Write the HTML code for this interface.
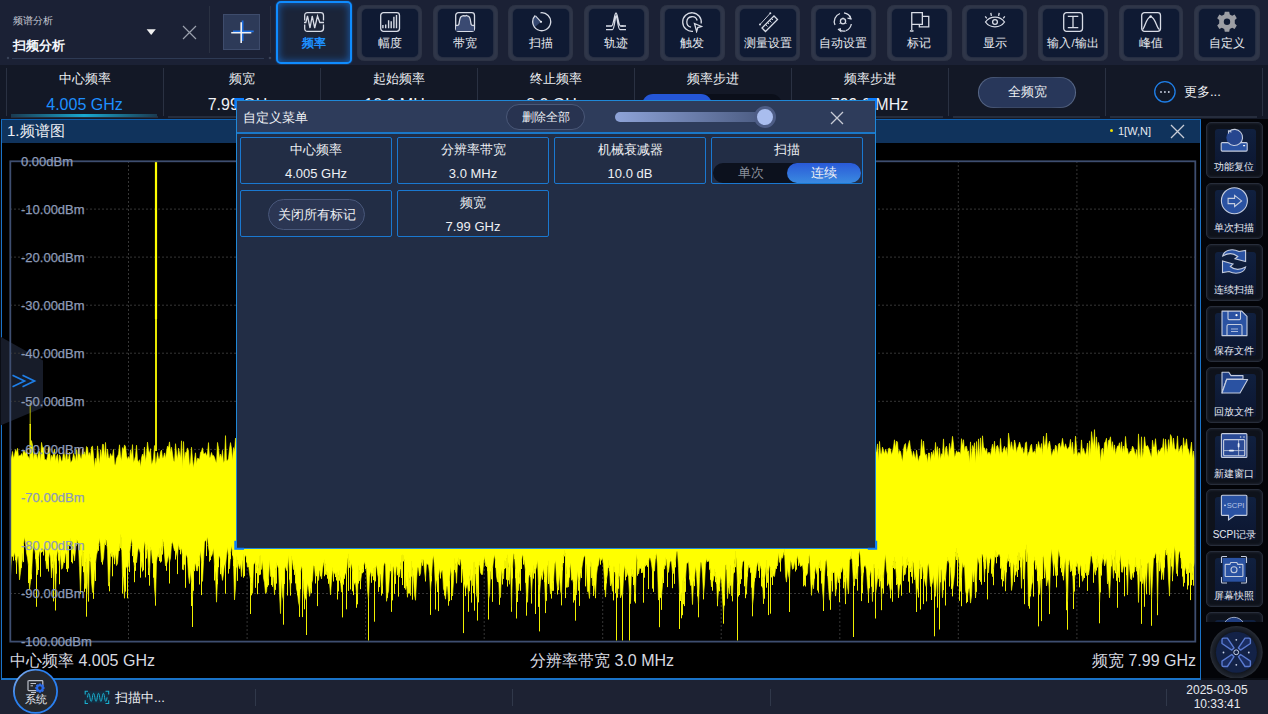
<!DOCTYPE html>
<html><head><meta charset="utf-8">
<style>
*{box-sizing:border-box;margin:0;padding:0}
html,body{width:1268px;height:714px;overflow:hidden;background:#0a0d14;font-family:"Liberation Sans",sans-serif;color:#e8ebf0}
.a{position:absolute}
#top{left:0;top:0;width:1268px;height:65px;background:#1b2135}
#par{left:0;top:65px;width:1268px;height:54px;background:#131826}
.tb{position:absolute;top:4.7px;height:56.3px;width:65px;border-radius:7px;background:#30374a;box-shadow:inset 0 0 2px #262c3c}
.tb .in{position:absolute;left:5px;top:4.3px;right:4.5px;bottom:4.4px;border-radius:5px;background:#0f1a33;box-shadow:0 0 2px #0f1a33}
.tb .lb{position:absolute;left:0;right:0;top:31.5px;text-align:center;font-size:11.5px;color:#e6e9ef;white-space:nowrap}
.tb svg{position:absolute;left:22px;top:7px}
.pc{position:absolute;top:0;height:54px;width:157px;text-align:center}
.pc .l{position:absolute;left:0;right:0;top:5px;font-size:13px;color:#eef0f4}
.pc .v{position:absolute;left:0;right:0;top:30.5px;font-size:16px;color:#f0f2f6}
.sep{position:absolute;width:1px;background:#2a3142}
#chart{left:1px;top:119px;width:1200px;height:561px;border:1px solid #1a73c8;border-top:2px solid #0f60b0;border-bottom:2px solid #1a73c8;background:#000}
#ctitle{left:0;top:-1px;width:1198px;height:23px;background:#10335c}
.yl{position:absolute;left:21px;font-size:13px;line-height:15px;color:#8d9bb8;white-space:nowrap;-webkit-text-stroke:0.25px #8d9bb8}
#side{left:1201px;top:119px;width:67px;height:559px;background:#030408}
.sb{position:absolute;left:5.2px;width:56.4px;height:56.6px;border-radius:5px;background:#0e121b;border:1px solid #272d3a;box-shadow:inset 0 0 3px rgba(90,100,120,0.35)}
.sb .in{position:absolute;left:7.6px;top:6.6px;width:41px;height:43px;border-radius:3px;background:linear-gradient(180deg,#10203f,#0c1630)}
.sb .lb{position:absolute;left:0;right:0;top:37.5px;text-align:center;font-size:10px;color:#e6e9ef;white-space:nowrap}
#status{left:0;top:680px;width:1268px;height:34px;background:#1d2233}
#dlg{left:236px;top:100px;width:640px;height:449px;background:#222d45;border:1px solid #1f88d8}
#dhead{left:0;top:0;width:638px;height:33px;background:#2e3c5b;border-bottom:2px solid #1a78c8}
.cell{position:absolute;width:152px;height:47px;border:1px solid #1a78d0;border-radius:2px;text-align:center}
.cell .l{position:absolute;left:0;right:0;top:2.5px;font-size:13px;color:#eef0f4}
.cell .v{position:absolute;left:0;right:0;top:28px;font-size:13px;color:#eef0f4}
</style></head><body>

<!-- TOP BAR -->
<div id="top" class="a">
  <div class="a" style="left:13px;top:14px;font-size:10px;color:#c8ccd6">频谱分析</div>
  <div class="a" style="left:13px;top:37px;font-size:13px;font-weight:bold;color:#f4f6fa">扫频分析</div>
  <svg class="a" style="left:146px;top:29px" width="11" height="7"><path d="M0.6 0.3H9.8L5.2 6Z" fill="#f0f0f0"/></svg>
  <svg class="a" style="left:182px;top:25px" width="15" height="15"><path d="M1 1L14 14M14 1L1 14" stroke="#9aa0ac" stroke-width="1.2"/></svg>
  <div class="a" style="left:209px;top:6px;width:1px;height:47px;background:#2a3142"></div>
  <div class="a" style="left:270px;top:6px;width:1px;height:47px;background:#2a3142"></div>
  <div class="a" style="left:12px;top:58px;width:252px;height:1px;background:#2e3a54"></div>
  <div class="a" style="left:223px;top:14px;width:37px;height:36px;background:#2d3a58;border:1px solid #3e4c6c"></div>
  <svg class="a" style="left:225px;top:15px" width="34" height="34" viewBox="225 15 34 34"><path d="M242.6 20.4V41M233 31.4H253.7" stroke="#1f6fe0" stroke-width="1.8"/><path d="M241.2 22.2V43.1M231.2 32.8H251.3" stroke="#eef0f4" stroke-width="1.6"/></svg><svg class="a" style="left:264px;top:54px" width="10" height="8"><circle cx="6" cy="4" r="1.3" fill="#3a4358"/></svg><svg class="a" style="left:5px;top:54px" width="6" height="8"><circle cx="3" cy="4" r="1.2" fill="#3a4358"/></svg>

  <!-- active freq button -->
  <div class="a" style="left:276px;top:1px;width:76px;height:63px;border:2px solid #0f8cff;border-radius:5px;background:#1b2438;box-shadow:0 0 9px rgba(26,120,230,0.75) inset, 0 0 2px rgba(26,140,255,0.6)"></div>
  <svg class="a" style="left:303px;top:11px" width="22" height="22" viewBox="-1 -1 22 22"><path d="M0.7 8.6V3.5Q0.7 0.7 3.5 0.7H16.7Q19.5 0.7 19.5 3.5V8.6M19.5 12.4V16.5Q19.5 19.3 16.7 19.3H3.5Q0.7 19.3 0.7 16.5V12.4" stroke="#d8dce6" fill="none" stroke-width="1.3" stroke-width="1.4"/><path d="M0 10.5H1.8L3.5 4L6 16L8.2 4L10.7 16L13.5 4L15.8 10.5H20" stroke="#d8dce6" fill="none" stroke-width="1.3" stroke-width="1.1"/></svg>
  <div class="a" style="left:276px;top:35px;width:76px;text-align:center;font-size:12px;font-weight:bold;color:#1e90ff">频率</div>

  <div class="tb" style="left:357.0px;width:65px"><div class="in"></div><svg width="22" height="22" viewBox="-1 -1 22 22" style="left:21.5px;top:6px"><rect x="0.7" y="0.7" width="18.8" height="18.6" rx="2.8" stroke="#d8dce6" fill="none" stroke-width="1.3"/><path d="M2.9 16.3V13M5.7 16.3V12.4M8.6 16.3V8.2M11.2 16.3V9.2M13.9 16.3V4.8M16.5 16.3V2.9" stroke="#d8dce6" stroke-width="1.4"/></svg><div class="lb">幅度</div></div>
<div class="tb" style="left:432.65px;width:65px"><div class="in"></div><svg width="22" height="22" viewBox="-1 -1 22 22" style="left:21.5px;top:6px"><rect x="0.7" y="0.7" width="18.8" height="18.6" rx="2.8" stroke="#d8dce6" fill="none" stroke-width="1.3"/><path d="M1 13.5C3 13 3.5 14 4 12C4.5 9 4.6 4.5 7 4.2L8.5 3.6L10 4L11.5 3.4L13 4.2C15.5 4.5 15.5 9 16 12C16.5 14 17 13 19 13.5V19H1Z" fill="#3a4a72"/><path d="M1 13.5C3 13 3.5 14 4 12C4.5 9 4.6 4.5 7 4.2L8.5 3.6L10 4L11.5 3.4L13 4.2C15.5 4.5 15.5 9 16 12C16.5 14 17 13 19 13.5" stroke="#d8dce6" fill="none" stroke-width="1.3" stroke-width="1.1"/></svg><div class="lb">带宽</div></div>
<div class="tb" style="left:508.3px;width:65px"><div class="in"></div><svg width="22" height="22" viewBox="-1 -1 22 22" style="left:21.5px;top:6px"><path d="M10 9.8L4.5 3.8A8.6 8.6 0 0 0 3.5 15.5Z" fill="#34466e"/><path d="M4.2 3.5A9 9 0 1 0 9.5 0.8" stroke="#d8dce6" fill="none" stroke-width="1.3"/><path d="M10 9.8L4.5 3.8" stroke="#d8dce6" stroke-width="1.1"/><circle cx="10" cy="9.8" r="1.1" fill="#e8ecf4"/></svg><div class="lb">扫描</div></div>
<div class="tb" style="left:583.95px;width:65px"><div class="in"></div><svg width="22" height="22" viewBox="-1 -1 22 22" style="left:21.5px;top:6px"><path d="M0 14H5.5C7.5 14 8.5 1 10 1C11.5 1 12.5 14 14.5 14H20M0 17.6H6.5C8.5 17.6 9 4 10.2 4C11.4 4 11.8 17.6 14 17.6H20" stroke="#d8dce6" fill="none" stroke-width="1.3" stroke-width="1.1"/><path d="M15.5 13L18.5 14L15.5 15Z" fill="#d8dce6"/></svg><div class="lb">轨迹</div></div>
<div class="tb" style="left:659.6px;width:65px"><div class="in"></div><svg width="22" height="22" viewBox="-1 -1 22 22" style="left:21.5px;top:6px"><path d="M19.2 11.5A9.3 9.3 0 1 0 11 19.3" stroke="#d8dce6" fill="none" stroke-width="1.3"/><path d="M15.2 8.5A5.3 5.3 0 1 0 9 15.2" stroke="#d8dce6" fill="none" stroke-width="1.3"/><path d="M12.5 11.5L19.5 14.5L15.8 15.5L14.6 19.5Z" stroke="#d8dce6" fill="none" stroke-width="1.3" stroke-width="1.1"/></svg><div class="lb">触发</div></div>
<div class="tb" style="left:735.25px;width:65px"><div class="in"></div><svg width="22" height="22" viewBox="-1 -1 22 22" style="left:21.5px;top:6px"><path d="M7.5 19.5L19.5 7.5L16 4L4 16Z" stroke="#d8dce6" fill="none" stroke-width="1.3" stroke-width="1.2"/><path d="M8 13L9.5 14.5M10 11L11 12M12 9L13.5 10.5M14 7L15 8" stroke="#d8dce6" stroke-width="0.9"/><path d="M2 12.5L12.3 1.2" stroke="#d8dce6" stroke-width="0.9"/><circle cx="2" cy="12.5" r="1" fill="#d8dce6"/><circle cx="12.3" cy="1.2" r="1" fill="#d8dce6"/></svg><div class="lb">测量设置</div></div>
<div class="tb" style="left:810.9000000000001px;width:65px"><div class="in"></div><svg width="22" height="22" viewBox="-1 -1 22 22" style="left:21.5px;top:6px"><path d="M7 1.5A8.5 8.5 0 0 0 2 13M18 7A8.5 8.5 0 0 0 11 0.8M13 18.7A8.5 8.5 0 0 0 18.3 12M6.5 18A8.5 8.5 0 0 0 12.5 19" stroke="#d8dce6" fill="none" stroke-width="1.3" stroke-width="1.1"/><path d="M16.5 3.5L17.8 6.8L14.5 6.2M5 17L7.5 19L7 16" stroke="#d8dce6" fill="none" stroke-width="1.3" stroke-width="1"/><circle cx="10" cy="9.3" r="2.6" stroke="#d8dce6" fill="none" stroke-width="1.3"/><path d="M10 5.5V6.6M6.5 11.5L7.5 11M13.5 11.5L12.5 11" stroke="#d8dce6" stroke-width="1"/></svg><div class="lb">自动设置</div></div>
<div class="tb" style="left:886.5500000000001px;width:65px"><div class="in"></div><svg width="22" height="22" viewBox="-1 -1 22 22" style="left:21.5px;top:6px"><path d="M2.75 18.2V0.6H13.35V12.4H2.75M13.35 4.4H19.75V14.8H10.35V12.4" stroke="#d8dce6" fill="none" stroke-width="1.3" stroke-width="1.1"/><path d="M1 18.6Q2.75 19.8 4.5 18.6" stroke="#d8dce6" fill="none" stroke-width="1.3" stroke-width="1.1"/></svg><div class="lb">标记</div></div>
<div class="tb" style="left:962.2px;width:65px"><div class="in"></div><svg width="22" height="22" viewBox="-1 -1 22 22" style="left:21.5px;top:6px"><path d="M0.5 10C5 3.5 15 3.5 19.5 10C15 16.5 5 16.5 0.5 10Z" stroke="#d8dce6" fill="none" stroke-width="1.3"/><circle cx="10" cy="10" r="2.4" stroke="#d8dce6" fill="none" stroke-width="1.3" stroke-width="1.5"/><path d="M1.8 6.3L0.2 4.3M6.4 3.8L5.8 0.8M13.6 3.8L14.2 0.8M18.2 6.3L19.8 4.3" stroke="#d8dce6" fill="none" stroke-width="1.3" stroke-width="1.1"/></svg><div class="lb">显示</div></div>
<div class="tb" style="left:1038px;width:70px"><div class="in"></div><svg width="22" height="22" viewBox="-1 -1 22 22" style="left:24.0px;top:6px"><rect x="0.7" y="0.7" width="18.8" height="18.6" rx="2.8" stroke="#d8dce6" fill="none" stroke-width="1.3" stroke-width="1.5"/><path d="M4.8 4.3H15.3M10 4.3V15.6M4.8 15.6H15.3" stroke="#d8dce6" fill="none" stroke-width="1.3" stroke-width="1.5"/></svg><div class="lb">输入/输出</div></div>
<div class="tb" style="left:1118.8px;width:64.5px"><div class="in"></div><svg width="22" height="22" viewBox="-1 -1 22 22" style="left:21.25px;top:6px"><rect x="0.7" y="0.7" width="18.8" height="18.6" rx="2.8" stroke="#d8dce6" fill="none" stroke-width="1.3"/><path d="M1.5 17.5C4 16 5 5.5 9.7 4.6C14.5 5.5 15.5 16 18.5 17.5" stroke="#d8dce6" fill="none" stroke-width="1.3" stroke-width="1.1"/><circle cx="9.7" cy="4.5" r="1.2" fill="#e8ecf4"/></svg><div class="lb">峰值</div></div>
<div class="tb" style="left:1194px;width:65.5px"><div class="in"></div><svg width="22" height="22" viewBox="-1 -1 22 22" style="left:21.75px;top:6px"><g transform="translate(10 9.8)"><path fill="#9c9ea4" d="M-2.2 -10H2.2L2.8 -7.2L5.2 -6L7.6 -7.3L9.8 -3.6L7.8 -1.8V1.8L9.8 3.6L7.6 7.3L5.2 6L2.8 7.2L2.2 10H-2.2L-2.8 7.2L-5.2 6L-7.6 7.3L-9.8 3.6L-7.8 1.8V-1.8L-9.8 -3.6L-7.6 -7.3L-5.2 -6L-2.8 -7.2Z"/><circle r="3.2" fill="#0f1a33"/></g></svg><div class="lb">自定义</div></div>
</div>

<!-- PARAM BAR -->
<div id="par" class="a">
  <div class="pc" style="left:6px"><div class="l">中心频率</div><div class="v" style="color:#1e8fff">4.005 GHz</div></div>
<div class="pc" style="left:163px"><div class="l">频宽</div><div class="v" style="color:#f0f2f6">7.99 GHz</div></div>
<div class="pc" style="left:320px"><div class="l">起始频率</div><div class="v" style="color:#f0f2f6">10.0 MHz</div></div>
<div class="pc" style="left:477px"><div class="l">终止频率</div><div class="v" style="color:#f0f2f6">8.0 GHz</div></div>
<div class="pc" style="left:634px"><div class="l">频率步进</div><div class="v" style="color:#f0f2f6"></div></div>
<div class="pc" style="left:791px"><div class="l">频率步进</div><div class="v" style="color:#f0f2f6">799.0 MHz</div></div>
<div class="sep" style="left:6px;top:3px;height:48px"></div>
<div class="a" style="left:11px;top:51px;width:147px;height:2px;background:#262d3d"></div>
<div class="sep" style="left:163px;top:3px;height:48px"></div>
<div class="a" style="left:168px;top:51px;width:147px;height:2px;background:#262d3d"></div>
<div class="sep" style="left:320px;top:3px;height:48px"></div>
<div class="a" style="left:325px;top:51px;width:147px;height:2px;background:#262d3d"></div>
<div class="sep" style="left:477px;top:3px;height:48px"></div>
<div class="a" style="left:482px;top:51px;width:147px;height:2px;background:#262d3d"></div>
<div class="sep" style="left:634px;top:3px;height:48px"></div>
<div class="a" style="left:639px;top:51px;width:147px;height:2px;background:#262d3d"></div>
<div class="sep" style="left:791px;top:3px;height:48px"></div>
<div class="a" style="left:796px;top:51px;width:147px;height:2px;background:#262d3d"></div>
<div class="sep" style="left:948px;top:3px;height:48px"></div>
<div class="a" style="left:953px;top:51px;width:147px;height:2px;background:#262d3d"></div>
<div class="sep" style="left:1105px;top:3px;height:48px"></div>
<div class="a" style="left:1110px;top:51px;width:147px;height:2px;background:#262d3d"></div>
<div class="sep" style="left:1262px;top:3px;height:48px"></div>
<div class="a" style="left:11px;top:49px;width:146px;height:3px;background:linear-gradient(90deg,#1a3a50,#19a8d0 50%,#1a3a50)"></div>
<div class="a" style="left:642px;top:29px;width:140px;height:22px;border-radius:11px;background:#0b0f1a"></div><div class="a" style="left:642px;top:29px;width:70px;height:22px;border-radius:11px;background:#2456d8"></div>
<div class="a" style="left:978px;top:11.8px;width:98px;height:31px;border-radius:16px;background:linear-gradient(90deg,#5a6a8a,#3a4866 25%,#3a4866 75%,#5a6a8a);padding:1px"><div style="width:100%;height:100%;border-radius:15px;background:#28375a;text-align:center;line-height:28px;font-size:13px;color:#eef0f4">全频宽</div></div>
<svg class="a" style="left:1152px;top:14px" width="26" height="26" viewBox="1152 79 26 26"><circle cx="1164.9" cy="91.8" r="10.2" fill="none" stroke="#1f7fe8" stroke-width="1.3"/><circle cx="1161" cy="92" r="0.9" fill="#cfd6e6"/><circle cx="1164.9" cy="92" r="0.9" fill="#cfd6e6"/><circle cx="1168.8" cy="92" r="0.9" fill="#cfd6e6"/></svg>
<div class="a" style="left:1184px;top:18px;font-size:13px;color:#eef0f4">更多...</div>
</div>

<!-- CHART -->
<div id="chart" class="a">
  <div id="ctitle" class="a">
    <div class="a" style="left:5px;top:2px;font-size:15px;color:#eef0f4">1.频谱图</div>
    <div class="a" style="left:1108px;top:9px;width:3px;height:3px;border-radius:50%;background:#f0e000"></div>
    <div class="a" style="left:1116px;top:5px;font-size:11px;color:#e6e9ef">1[W,N]</div>
    <svg class="a" style="left:1168px;top:4px" width="15" height="15"><path d="M1 1L14 14M14 1L1 14" stroke="#c8ccd6" stroke-width="1.3"/></svg>
  </div>
  <svg class="a" style="left:-1px;top:-1px" width="1200" height="560" viewBox="1 119 1200 560">
    <path d="M1 336L43 359.5V406.5L1 424.2Z" fill="#171c29"/><path d="M12.5 374.3L24.5 380L12.5 385.7M22.5 374.3L34.5 380L22.5 385.7" fill="none" stroke="#1f7fe8" stroke-width="1.7"/>
    <path d="M10 208.1H1195.4" stroke="#363636" stroke-width="1" stroke-dasharray="2 2"/>
<path d="M10 256.1H1195.4" stroke="#363636" stroke-width="1" stroke-dasharray="2 2"/>
<path d="M10 304.2H1195.4" stroke="#363636" stroke-width="1" stroke-dasharray="2 2"/>
<path d="M10 352.2H1195.4" stroke="#363636" stroke-width="1" stroke-dasharray="2 2"/>
<path d="M10 400.3H1195.4" stroke="#363636" stroke-width="1" stroke-dasharray="2 2"/>
<path d="M10 448.4H1195.4" stroke="#363636" stroke-width="1" stroke-dasharray="2 2"/>
<path d="M10 496.4H1195.4" stroke="#363636" stroke-width="1" stroke-dasharray="2 2"/>
<path d="M10 544.5H1195.4" stroke="#363636" stroke-width="1" stroke-dasharray="2 2"/>
<path d="M10 592.5H1195.4" stroke="#363636" stroke-width="1" stroke-dasharray="2 2"/>
<path d="M128.5 160V640.6" stroke="#363636" stroke-width="1" stroke-dasharray="2 2"/>
<path d="M247.1 160V640.6" stroke="#363636" stroke-width="1" stroke-dasharray="2 2"/>
<path d="M365.6 160V640.6" stroke="#363636" stroke-width="1" stroke-dasharray="2 2"/>
<path d="M484.2 160V640.6" stroke="#363636" stroke-width="1" stroke-dasharray="2 2"/>
<path d="M602.7 160V640.6" stroke="#363636" stroke-width="1" stroke-dasharray="2 2"/>
<path d="M721.2 160V640.6" stroke="#363636" stroke-width="1" stroke-dasharray="2 2"/>
<path d="M839.8 160V640.6" stroke="#363636" stroke-width="1" stroke-dasharray="2 2"/>
<path d="M958.3 160V640.6" stroke="#363636" stroke-width="1" stroke-dasharray="2 2"/>
<path d="M1076.9 160V640.6" stroke="#363636" stroke-width="1" stroke-dasharray="2 2"/>
    <path d="M10.5 452.3L11.5 457.7L12.5 450.5L13.5 457.4L14.5 454.1L15.5 448.6L16.5 451.5L17.5 447.3L18.5 455.6L19.5 454.6L20.5 454.8L21.5 452.5L22.5 455.9L23.5 449.2L24.5 450.2L25.5 453.3L26.5 448.4L27.5 454.9L28.5 455.7L29.5 459.0L30.5 454.1L31.5 439.6L32.5 444.1L33.5 458.9L34.5 451.8L35.5 453.6L36.5 453.4L37.5 458.9L38.5 450.2L39.5 450.6L40.5 460.2L41.5 441.4L42.5 446.7L43.5 446.6L44.5 458.4L45.5 458.5L46.5 459.5L47.5 455.3L48.5 446.2L49.5 446.7L50.5 461.0L51.5 454.3L52.5 457.0L53.5 452.1L54.5 448.3L55.5 460.2L56.5 455.2L57.5 453.2L58.5 463.3L59.5 453.8L60.5 456.1L61.5 461.1L62.5 458.9L63.5 450.4L64.5 454.4L65.5 459.9L66.5 447.7L67.5 458.7L68.5 457.7L69.5 451.2L70.5 461.4L71.5 460.7L72.5 458.6L73.5 452.5L74.5 455.4L75.5 460.2L76.5 448.6L77.5 460.4L78.5 447.0L79.5 451.0L80.5 456.9L81.5 457.4L82.5 448.0L83.5 452.6L84.5 450.8L85.5 455.8L86.5 445.5L87.5 446.6L88.5 455.3L89.5 451.6L90.5 456.5L91.5 446.0L92.5 445.1L93.5 454.8L94.5 466.9L95.5 457.3L96.5 462.5L97.5 444.9L98.5 453.9L99.5 463.6L100.5 448.7L101.5 457.2L102.5 443.3L103.5 443.5L104.5 456.8L105.5 441.4L106.5 458.8L107.5 448.0L108.5 456.5L109.5 457.8L110.5 452.6L111.5 455.2L112.5 455.0L113.5 448.4L114.5 463.0L115.5 464.2L116.5 457.4L117.5 455.4L118.5 453.1L119.5 443.8L120.5 455.1L121.5 459.7L122.5 446.6L123.5 449.4L124.5 443.9L125.5 445.5L126.5 454.5L127.5 458.7L128.5 455.6L129.5 458.7L130.5 449.0L131.5 455.2L132.5 443.6L133.5 461.8L134.5 458.8L135.5 455.1L136.5 444.2L137.5 459.0L138.5 461.4L139.5 458.7L140.5 466.3L141.5 456.9L142.5 453.1L143.5 456.2L144.5 446.1L145.5 460.7L146.5 453.6L147.5 441.1L148.5 449.3L149.5 452.7L150.5 447.7L151.5 463.8L152.5 461.3L153.5 457.0L154.5 444.5L155.5 463.8L156.5 459.7L157.5 451.5L158.5 457.5L159.5 458.0L160.5 451.2L161.5 449.1L162.5 457.3L163.5 456.2L164.5 451.9L165.5 457.5L166.5 450.4L167.5 445.1L168.5 447.0L169.5 440.9L170.5 452.2L171.5 446.2L172.5 452.8L173.5 459.4L174.5 461.2L175.5 442.7L176.5 452.2L177.5 458.4L178.5 447.1L179.5 451.7L180.5 457.2L181.5 439.8L182.5 466.9L183.5 440.5L184.5 460.0L185.5 451.4L186.5 451.4L187.5 446.9L188.5 449.7L189.5 465.1L190.5 461.0L191.5 446.2L192.5 458.5L193.5 467.0L194.5 458.7L195.5 451.8L196.5 462.8L197.5 457.3L198.5 457.6L199.5 459.0L200.5 451.4L201.5 450.2L202.5 446.8L203.5 452.7L204.5 452.9L205.5 451.6L206.5 455.3L207.5 452.1L208.5 441.6L209.5 457.2L210.5 455.7L211.5 451.5L212.5 454.8L213.5 454.4L214.5 456.4L215.5 459.7L216.5 462.3L217.5 441.4L218.5 447.2L219.5 457.7L220.5 453.1L221.5 457.7L222.5 449.3L223.5 462.2L224.5 459.2L225.5 434.6L226.5 459.2L227.5 459.8L228.5 457.3L229.5 448.1L230.5 441.6L231.5 447.5L232.5 459.4L233.5 446.6L234.5 451.3L235.5 437.1L236.5 445.3L237.5 444.2L238.5 455.4L239.5 449.3L240.5 466.4L241.5 449.2L242.5 442.3L243.5 453.9L244.5 455.7L245.5 449.4L246.5 456.7L247.5 455.0L248.5 444.6L249.5 464.4L250.5 460.0L251.5 464.0L252.5 453.7L253.5 454.5L254.5 459.4L255.5 452.1L256.5 457.1L257.5 466.6L258.5 445.2L259.5 446.9L260.5 458.5L261.5 441.9L262.5 448.6L263.5 452.2L264.5 454.7L265.5 447.7L266.5 448.4L267.5 460.0L268.5 455.1L269.5 445.8L270.5 455.2L271.5 451.6L272.5 446.0L273.5 442.2L274.5 453.9L275.5 446.0L276.5 455.5L277.5 458.6L278.5 452.4L279.5 452.3L280.5 452.1L281.5 454.1L282.5 456.4L283.5 456.8L284.5 452.7L285.5 464.7L286.5 454.3L287.5 447.1L288.5 466.8L289.5 447.9L290.5 446.1L291.5 446.6L292.5 451.8L293.5 450.3L294.5 458.2L295.5 457.8L296.5 441.4L297.5 455.3L298.5 464.3L299.5 450.7L300.5 459.2L301.5 454.3L302.5 463.0L303.5 468.1L304.5 460.0L305.5 445.0L306.5 456.1L307.5 445.6L308.5 445.5L309.5 459.8L310.5 461.8L311.5 459.1L312.5 456.2L313.5 460.1L314.5 446.0L315.5 455.3L316.5 448.7L317.5 447.3L318.5 454.8L319.5 457.4L320.5 450.2L321.5 450.0L322.5 448.9L323.5 457.0L324.5 461.0L325.5 463.0L326.5 445.3L327.5 451.8L328.5 444.8L329.5 449.0L330.5 457.5L331.5 457.8L332.5 465.8L333.5 461.3L334.5 456.8L335.5 453.5L336.5 443.0L337.5 461.4L338.5 460.3L339.5 458.9L340.5 448.7L341.5 450.3L342.5 449.2L343.5 450.5L344.5 458.2L345.5 457.8L346.5 458.1L347.5 457.7L348.5 448.3L349.5 455.2L350.5 440.4L351.5 449.6L352.5 455.3L353.5 448.0L354.5 457.0L355.5 456.2L356.5 454.2L357.5 454.2L358.5 453.0L359.5 465.7L360.5 447.1L361.5 446.8L362.5 438.7L363.5 452.4L364.5 454.3L365.5 443.9L366.5 450.1L367.5 450.5L368.5 458.5L369.5 464.3L370.5 446.1L371.5 449.7L372.5 455.8L373.5 444.7L374.5 446.8L375.5 452.1L376.5 455.4L377.5 453.4L378.5 455.2L379.5 458.9L380.5 457.2L381.5 456.1L382.5 452.4L383.5 454.6L384.5 459.5L385.5 462.8L386.5 448.2L387.5 455.8L388.5 454.9L389.5 443.9L390.5 435.3L391.5 450.9L392.5 454.8L393.5 462.3L394.5 454.8L395.5 451.2L396.5 457.1L397.5 456.4L398.5 445.2L399.5 453.7L400.5 458.0L401.5 452.1L402.5 459.5L403.5 457.8L404.5 461.0L405.5 456.5L406.5 456.2L407.5 460.4L408.5 449.7L409.5 453.3L410.5 449.0L411.5 457.7L412.5 438.6L413.5 446.6L414.5 453.2L415.5 448.6L416.5 454.7L417.5 466.9L418.5 463.6L419.5 448.7L420.5 446.8L421.5 451.5L422.5 459.1L423.5 449.9L424.5 451.2L425.5 455.3L426.5 438.7L427.5 443.6L428.5 459.3L429.5 449.1L430.5 453.4L431.5 443.8L432.5 458.3L433.5 454.9L434.5 452.3L435.5 451.8L436.5 453.2L437.5 459.1L438.5 464.7L439.5 454.4L440.5 453.1L441.5 460.3L442.5 443.9L443.5 445.2L444.5 455.0L445.5 449.6L446.5 459.6L447.5 448.9L448.5 455.6L449.5 456.8L450.5 445.8L451.5 456.3L452.5 444.4L453.5 455.8L454.5 446.6L455.5 459.3L456.5 463.1L457.5 457.5L458.5 441.1L459.5 454.3L460.5 463.3L461.5 446.7L462.5 452.2L463.5 442.4L464.5 447.8L465.5 449.5L466.5 454.1L467.5 450.2L468.5 451.8L469.5 442.2L470.5 455.6L471.5 458.2L472.5 449.7L473.5 452.3L474.5 456.0L475.5 453.3L476.5 449.3L477.5 460.4L478.5 450.5L479.5 444.1L480.5 453.6L481.5 458.5L482.5 451.2L483.5 452.4L484.5 452.5L485.5 446.0L486.5 454.3L487.5 449.5L488.5 450.7L489.5 447.0L490.5 447.1L491.5 458.0L492.5 456.7L493.5 458.5L494.5 450.7L495.5 457.2L496.5 453.7L497.5 456.1L498.5 462.0L499.5 453.2L500.5 454.0L501.5 468.6L502.5 456.5L503.5 460.3L504.5 449.8L505.5 452.3L506.5 448.2L507.5 449.5L508.5 459.8L509.5 445.6L510.5 462.4L511.5 451.6L512.5 462.4L513.5 453.2L514.5 449.5L515.5 444.7L516.5 452.4L517.5 458.7L518.5 449.9L519.5 453.1L520.5 448.6L521.5 463.9L522.5 458.2L523.5 446.4L524.5 453.8L525.5 450.8L526.5 460.4L527.5 457.8L528.5 458.1L529.5 445.0L530.5 453.6L531.5 453.1L532.5 451.8L533.5 447.4L534.5 459.0L535.5 446.0L536.5 447.4L537.5 450.3L538.5 446.5L539.5 465.9L540.5 460.9L541.5 444.9L542.5 454.0L543.5 459.3L544.5 452.6L545.5 463.7L546.5 458.9L547.5 461.8L548.5 455.1L549.5 449.4L550.5 453.0L551.5 452.2L552.5 455.6L553.5 448.0L554.5 455.7L555.5 443.1L556.5 440.9L557.5 450.8L558.5 452.4L559.5 448.6L560.5 441.7L561.5 457.4L562.5 453.5L563.5 454.0L564.5 457.7L565.5 444.9L566.5 452.9L567.5 459.7L568.5 451.7L569.5 458.9L570.5 460.8L571.5 442.1L572.5 446.5L573.5 445.4L574.5 446.3L575.5 456.1L576.5 448.8L577.5 451.7L578.5 455.8L579.5 442.6L580.5 453.1L581.5 456.5L582.5 461.1L583.5 456.8L584.5 455.1L585.5 451.9L586.5 464.6L587.5 456.6L588.5 461.2L589.5 448.9L590.5 449.3L591.5 460.6L592.5 459.4L593.5 441.3L594.5 452.5L595.5 457.8L596.5 441.4L597.5 457.2L598.5 441.0L599.5 451.3L600.5 439.8L601.5 438.7L602.5 455.7L603.5 451.5L604.5 464.4L605.5 459.5L606.5 454.0L607.5 446.1L608.5 464.1L609.5 443.4L610.5 449.5L611.5 456.2L612.5 455.3L613.5 450.4L614.5 449.9L615.5 451.2L616.5 441.5L617.5 448.3L618.5 456.0L619.5 450.2L620.5 452.5L621.5 451.8L622.5 450.2L623.5 453.3L624.5 458.3L625.5 454.6L626.5 457.3L627.5 454.2L628.5 451.9L629.5 458.1L630.5 448.9L631.5 445.6L632.5 459.0L633.5 461.9L634.5 439.0L635.5 463.1L636.5 457.5L637.5 456.6L638.5 460.0L639.5 463.9L640.5 444.5L641.5 460.6L642.5 454.9L643.5 457.9L644.5 446.6L645.5 459.0L646.5 446.4L647.5 450.4L648.5 457.3L649.5 443.7L650.5 452.5L651.5 462.4L652.5 456.1L653.5 455.2L654.5 436.5L655.5 451.8L656.5 455.4L657.5 444.7L658.5 444.5L659.5 445.7L660.5 449.3L661.5 465.5L662.5 449.7L663.5 442.0L664.5 453.8L665.5 460.6L666.5 462.3L667.5 457.2L668.5 456.2L669.5 460.5L670.5 454.9L671.5 449.2L672.5 452.4L673.5 460.8L674.5 441.8L675.5 462.6L676.5 449.8L677.5 456.6L678.5 452.6L679.5 457.0L680.5 444.7L681.5 451.1L682.5 460.2L683.5 449.9L684.5 456.0L685.5 452.3L686.5 446.9L687.5 456.7L688.5 437.2L689.5 456.5L690.5 460.5L691.5 459.4L692.5 460.9L693.5 447.8L694.5 449.8L695.5 458.0L696.5 450.5L697.5 448.2L698.5 453.5L699.5 437.7L700.5 454.7L701.5 454.9L702.5 455.3L703.5 454.2L704.5 460.0L705.5 458.1L706.5 454.8L707.5 453.2L708.5 454.9L709.5 457.5L710.5 454.9L711.5 461.2L712.5 451.9L713.5 460.9L714.5 459.6L715.5 457.2L716.5 449.5L717.5 463.7L718.5 450.3L719.5 457.4L720.5 456.6L721.5 456.3L722.5 463.1L723.5 456.0L724.5 453.8L725.5 461.0L726.5 449.4L727.5 457.5L728.5 458.6L729.5 454.2L730.5 448.6L731.5 440.2L732.5 439.7L733.5 450.3L734.5 446.3L735.5 451.2L736.5 466.3L737.5 452.8L738.5 460.2L739.5 453.7L740.5 448.3L741.5 452.6L742.5 446.9L743.5 459.0L744.5 458.7L745.5 450.6L746.5 467.0L747.5 453.9L748.5 447.2L749.5 447.9L750.5 452.0L751.5 447.8L752.5 451.1L753.5 455.1L754.5 454.2L755.5 442.6L756.5 456.7L757.5 437.9L758.5 450.1L759.5 462.8L760.5 453.3L761.5 445.1L762.5 459.5L763.5 455.9L764.5 459.4L765.5 454.9L766.5 466.5L767.5 463.9L768.5 459.3L769.5 458.4L770.5 444.8L771.5 461.6L772.5 438.7L773.5 439.3L774.5 457.5L775.5 453.4L776.5 439.9L777.5 449.1L778.5 458.9L779.5 461.6L780.5 449.2L781.5 454.1L782.5 450.4L783.5 451.4L784.5 449.2L785.5 438.6L786.5 446.6L787.5 453.8L788.5 455.8L789.5 450.5L790.5 462.5L791.5 448.5L792.5 457.9L793.5 458.3L794.5 457.6L795.5 445.6L796.5 452.7L797.5 448.0L798.5 436.9L799.5 457.3L800.5 442.0L801.5 449.9L802.5 451.3L803.5 443.2L804.5 447.7L805.5 457.8L806.5 456.7L807.5 461.4L808.5 451.8L809.5 444.1L810.5 454.2L811.5 458.0L812.5 462.7L813.5 446.8L814.5 453.6L815.5 449.9L816.5 446.6L817.5 449.6L818.5 461.1L819.5 457.5L820.5 445.6L821.5 443.1L822.5 448.8L823.5 453.7L824.5 449.1L825.5 443.1L826.5 452.1L827.5 459.1L828.5 453.7L829.5 450.5L830.5 445.0L831.5 447.7L832.5 452.7L833.5 449.2L834.5 446.6L835.5 444.6L836.5 451.1L837.5 450.5L838.5 448.1L839.5 447.0L840.5 458.4L841.5 458.2L842.5 440.7L843.5 454.2L844.5 457.9L845.5 441.4L846.5 449.3L847.5 459.7L848.5 447.5L849.5 452.6L850.5 459.1L851.5 452.4L852.5 449.5L853.5 442.3L854.5 447.4L855.5 446.2L856.5 462.2L857.5 450.6L858.5 453.2L859.5 455.2L860.5 446.4L861.5 436.8L862.5 442.3L863.5 451.3L864.5 443.4L865.5 441.9L866.5 459.6L867.5 453.8L868.5 455.6L869.5 451.0L870.5 446.6L871.5 448.9L872.5 449.7L873.5 451.3L874.5 457.2L875.5 450.5L876.5 451.2L877.5 442.9L878.5 460.2L879.5 440.4L880.5 451.9L881.5 453.5L882.5 446.1L883.5 449.6L884.5 453.2L885.5 448.3L886.5 450.9L887.5 454.0L888.5 447.6L889.5 447.2L890.5 448.0L891.5 454.0L892.5 450.8L893.5 446.0L894.5 438.8L895.5 447.8L896.5 440.0L897.5 441.2L898.5 454.1L899.5 449.6L900.5 450.4L901.5 456.1L902.5 460.9L903.5 448.5L904.5 443.9L905.5 442.5L906.5 452.1L907.5 447.9L908.5 443.1L909.5 439.5L910.5 447.8L911.5 451.4L912.5 456.8L913.5 450.3L914.5 454.6L915.5 458.5L916.5 449.2L917.5 455.6L918.5 461.1L919.5 455.3L920.5 454.1L921.5 438.5L922.5 450.2L923.5 440.0L924.5 451.0L925.5 454.7L926.5 453.3L927.5 462.1L928.5 452.0L929.5 452.1L930.5 460.9L931.5 451.0L932.5 455.0L933.5 449.4L934.5 457.5L935.5 441.4L936.5 452.9L937.5 445.7L938.5 459.3L939.5 447.2L940.5 458.6L941.5 452.8L942.5 453.5L943.5 437.9L944.5 457.3L945.5 447.3L946.5 445.1L947.5 452.5L948.5 456.8L949.5 442.4L950.5 450.2L951.5 444.6L952.5 435.3L953.5 443.3L954.5 456.4L955.5 454.1L956.5 449.8L957.5 451.7L958.5 450.8L959.5 451.2L960.5 453.5L961.5 437.7L962.5 445.1L963.5 438.7L964.5 450.8L965.5 445.6L966.5 445.2L967.5 451.2L968.5 449.8L969.5 461.7L970.5 440.9L971.5 458.8L972.5 444.5L973.5 447.7L974.5 441.8L975.5 462.3L976.5 440.5L977.5 456.2L978.5 437.9L979.5 456.9L980.5 436.9L981.5 455.7L982.5 434.8L983.5 446.3L984.5 447.0L985.5 450.8L986.5 447.4L987.5 453.9L988.5 451.4L989.5 451.5L990.5 454.7L991.5 448.7L992.5 443.2L993.5 449.7L994.5 440.2L995.5 454.1L996.5 445.4L997.5 444.3L998.5 447.6L999.5 454.4L1000.5 437.4L1001.5 450.6L1002.5 452.4L1003.5 448.0L1004.5 445.3L1005.5 451.0L1006.5 446.5L1007.5 456.2L1008.5 432.1L1009.5 440.1L1010.5 448.9L1011.5 440.8L1012.5 447.3L1013.5 450.1L1014.5 439.0L1015.5 443.2L1016.5 452.2L1017.5 447.1L1018.5 445.1L1019.5 441.1L1020.5 444.4L1021.5 448.4L1022.5 446.4L1023.5 453.2L1024.5 450.8L1025.5 441.8L1026.5 440.9L1027.5 456.0L1028.5 451.7L1029.5 450.2L1030.5 445.1L1031.5 443.2L1032.5 451.5L1033.5 451.5L1034.5 449.7L1035.5 453.6L1036.5 443.0L1037.5 448.3L1038.5 440.6L1039.5 445.7L1040.5 448.6L1041.5 442.5L1042.5 454.6L1043.5 435.2L1044.5 446.0L1045.5 442.3L1046.5 432.0L1047.5 450.0L1048.5 443.2L1049.5 440.1L1050.5 446.5L1051.5 455.6L1052.5 452.1L1053.5 448.4L1054.5 451.5L1055.5 444.1L1056.5 445.2L1057.5 453.7L1058.5 443.2L1059.5 442.1L1060.5 447.5L1061.5 443.8L1062.5 437.3L1063.5 444.1L1064.5 447.8L1065.5 442.8L1066.5 446.2L1067.5 448.8L1068.5 446.8L1069.5 445.2L1070.5 438.3L1071.5 450.3L1072.5 441.2L1073.5 453.2L1074.5 453.0L1075.5 435.1L1076.5 446.2L1077.5 455.8L1078.5 451.6L1079.5 451.8L1080.5 454.4L1081.5 438.9L1082.5 451.6L1083.5 447.4L1084.5 451.4L1085.5 454.2L1086.5 449.8L1087.5 442.0L1088.5 457.1L1089.5 439.8L1090.5 453.9L1091.5 430.6L1092.5 438.9L1093.5 445.5L1094.5 428.6L1095.5 450.8L1096.5 435.9L1097.5 450.4L1098.5 441.4L1099.5 445.9L1100.5 461.2L1101.5 449.1L1102.5 447.0L1103.5 456.4L1104.5 442.1L1105.5 440.4L1106.5 437.2L1107.5 449.7L1108.5 439.5L1109.5 439.3L1110.5 435.8L1111.5 448.4L1112.5 440.7L1113.5 451.0L1114.5 443.9L1115.5 454.1L1116.5 448.5L1117.5 445.0L1118.5 445.2L1119.5 441.8L1120.5 450.6L1121.5 440.8L1122.5 452.3L1123.5 445.0L1124.5 451.4L1125.5 435.4L1126.5 446.7L1127.5 448.1L1128.5 453.8L1129.5 451.9L1130.5 450.0L1131.5 449.9L1132.5 445.1L1133.5 447.0L1134.5 450.7L1135.5 454.7L1136.5 448.6L1137.5 459.0L1138.5 432.9L1139.5 450.4L1140.5 458.2L1141.5 435.8L1142.5 457.3L1143.5 450.6L1144.5 435.8L1145.5 444.2L1146.5 445.6L1147.5 444.4L1148.5 446.7L1149.5 449.9L1150.5 453.6L1151.5 456.8L1152.5 439.2L1153.5 445.9L1154.5 446.1L1155.5 437.7L1156.5 447.8L1157.5 455.5L1158.5 449.0L1159.5 451.3L1160.5 449.1L1161.5 446.8L1162.5 447.1L1163.5 437.6L1164.5 455.1L1165.5 438.1L1166.5 447.3L1167.5 452.5L1168.5 438.6L1169.5 449.1L1170.5 433.6L1171.5 435.9L1172.5 447.4L1173.5 437.1L1174.5 446.7L1175.5 449.4L1176.5 447.5L1177.5 434.9L1178.5 451.5L1179.5 449.3L1180.5 445.9L1181.5 444.3L1182.5 454.9L1183.5 436.8L1184.5 445.8L1185.5 443.9L1186.5 437.9L1187.5 447.0L1188.5 448.5L1189.5 455.1L1190.5 448.8L1191.5 441.1L1192.5 458.0L1193.5 450.0L1194.5 458.0L1194.5 560.9L1193.5 568.2L1192.5 575.1L1191.5 564.2L1190.5 562.7L1189.5 563.2L1188.5 571.2L1187.5 570.9L1186.5 570.2L1185.5 565.6L1184.5 572.2L1183.5 582.4L1182.5 563.8L1181.5 564.3L1180.5 551.4L1179.5 549.8L1178.5 554.8L1177.5 569.9L1176.5 572.6L1175.5 552.0L1174.5 545.3L1173.5 566.2L1172.5 575.9L1171.5 553.2L1170.5 559.5L1169.5 595.1L1168.5 578.2L1167.5 555.1L1166.5 548.3L1165.5 549.3L1164.5 559.8L1163.5 578.7L1162.5 571.1L1161.5 572.0L1160.5 565.7L1159.5 554.4L1158.5 562.5L1157.5 603.3L1156.5 554.3L1155.5 551.6L1154.5 557.1L1153.5 556.8L1152.5 576.7L1151.5 599.0L1150.5 563.9L1149.5 593.8L1148.5 560.7L1147.5 563.3L1146.5 583.5L1145.5 571.6L1144.5 593.1L1143.5 576.8L1142.5 582.6L1141.5 567.6L1140.5 559.2L1139.5 573.5L1138.5 601.5L1137.5 568.2L1136.5 570.3L1135.5 557.5L1134.5 570.6L1133.5 571.9L1132.5 572.1L1131.5 579.0L1130.5 577.4L1129.5 566.3L1128.5 559.5L1127.5 593.9L1126.5 567.2L1125.5 565.1L1124.5 566.6L1123.5 564.4L1122.5 571.3L1121.5 571.0L1120.5 553.2L1119.5 563.2L1118.5 576.2L1117.5 577.5L1116.5 572.0L1115.5 550.0L1114.5 559.4L1113.5 577.3L1112.5 561.0L1111.5 554.8L1110.5 575.9L1109.5 596.8L1108.5 578.2L1107.5 583.0L1106.5 556.9L1105.5 561.5L1104.5 564.9L1103.5 554.4L1102.5 559.0L1101.5 565.2L1100.5 577.9L1099.5 602.1L1098.5 566.7L1097.5 555.7L1096.5 559.9L1095.5 574.1L1094.5 570.1L1093.5 564.1L1092.5 560.6L1091.5 551.7L1090.5 556.9L1089.5 566.9L1088.5 574.1L1087.5 572.4L1086.5 574.5L1085.5 564.3L1084.5 573.0L1083.5 577.5L1082.5 580.4L1081.5 566.7L1080.5 563.6L1079.5 573.3L1078.5 572.5L1077.5 562.9L1076.5 561.5L1075.5 567.6L1074.5 579.1L1073.5 594.4L1072.5 564.5L1071.5 569.7L1070.5 570.8L1069.5 558.0L1068.5 561.3L1067.5 601.6L1066.5 592.2L1065.5 556.7L1064.5 564.9L1063.5 579.3L1062.5 567.4L1061.5 568.1L1060.5 557.5L1059.5 553.8L1058.5 548.1L1057.5 566.8L1056.5 573.8L1055.5 574.5L1054.5 560.8L1053.5 567.5L1052.5 557.3L1051.5 547.7L1050.5 563.8L1049.5 592.7L1048.5 577.7L1047.5 580.0L1046.5 585.0L1045.5 565.0L1044.5 573.3L1043.5 554.5L1042.5 557.5L1041.5 597.2L1040.5 580.7L1039.5 575.8L1038.5 589.9L1037.5 571.8L1036.5 565.9L1035.5 560.9L1034.5 556.7L1033.5 564.7L1032.5 581.1L1031.5 584.2L1030.5 593.2L1029.5 597.9L1028.5 605.1L1027.5 556.8L1026.5 544.7L1025.5 550.6L1024.5 580.1L1023.5 561.3L1022.5 555.1L1021.5 587.4L1020.5 558.5L1019.5 552.7L1018.5 552.3L1017.5 556.5L1016.5 568.0L1015.5 574.3L1014.5 566.3L1013.5 561.2L1012.5 582.3L1011.5 589.5L1010.5 562.5L1009.5 560.2L1008.5 554.4L1007.5 559.6L1006.5 564.0L1005.5 584.4L1004.5 570.6L1003.5 567.3L1002.5 578.0L1001.5 570.4L1000.5 557.6L999.5 553.2L998.5 553.3L997.5 556.0L996.5 552.5L995.5 550.6L994.5 557.9L993.5 569.0L992.5 575.7L991.5 559.5L990.5 556.2L989.5 559.9L988.5 571.8L987.5 570.4L986.5 554.4L985.5 560.6L984.5 576.6L983.5 558.4L982.5 553.0L981.5 553.9L980.5 559.3L979.5 564.4L978.5 560.0L977.5 556.0L976.5 582.3L975.5 597.0L974.5 568.6L973.5 581.0L972.5 569.1L971.5 595.1L970.5 602.1L969.5 586.6L968.5 588.6L967.5 595.5L966.5 594.6L965.5 589.3L964.5 563.5L963.5 566.3L962.5 560.8L961.5 577.9L960.5 590.4L959.5 566.0L958.5 556.4L957.5 554.7L956.5 548.1L955.5 553.0L954.5 572.5L953.5 581.8L952.5 589.5L951.5 583.7L950.5 567.4L949.5 563.3L948.5 560.0L947.5 557.0L946.5 565.2L945.5 578.3L944.5 578.8L943.5 581.8L942.5 596.8L941.5 567.7L940.5 570.8L939.5 595.3L938.5 563.4L937.5 593.6L936.5 575.3L935.5 595.4L934.5 592.4L933.5 573.7L932.5 581.2L931.5 584.6L930.5 585.4L929.5 573.4L928.5 561.7L927.5 566.1L926.5 586.6L925.5 583.7L924.5 578.4L923.5 576.0L922.5 565.0L921.5 567.6L920.5 565.4L919.5 560.5L918.5 587.7L917.5 587.4L916.5 595.5L915.5 574.5L914.5 578.8L913.5 562.1L912.5 561.0L911.5 568.7L910.5 568.1L909.5 570.1L908.5 563.1L907.5 557.3L906.5 558.9L905.5 572.7L904.5 574.2L903.5 568.2L902.5 556.5L901.5 583.6L900.5 582.8L899.5 585.0L898.5 594.0L897.5 578.8L896.5 578.0L895.5 563.0L894.5 556.9L893.5 561.9L892.5 566.4L891.5 587.7L890.5 590.7L889.5 584.4L888.5 582.0L887.5 574.5L886.5 568.5L885.5 552.9L884.5 562.2L883.5 578.0L882.5 574.8L881.5 599.0L880.5 574.6L879.5 581.4L878.5 568.8L877.5 578.1L876.5 586.1L875.5 593.3L874.5 564.2L873.5 564.3L872.5 600.6L871.5 573.7L870.5 568.8L869.5 577.7L868.5 595.0L867.5 585.3L866.5 569.0L865.5 564.6L864.5 564.7L863.5 566.8L862.5 584.9L861.5 575.8L860.5 557.2L859.5 548.7L858.5 554.6L857.5 578.1L856.5 578.0L855.5 564.6L854.5 582.3L853.5 581.9L852.5 563.5L851.5 551.5L850.5 557.8L849.5 559.3L848.5 593.0L847.5 585.6L846.5 571.3L845.5 598.6L844.5 576.6L843.5 570.5L842.5 565.4L841.5 571.3L840.5 568.4L839.5 579.9L838.5 581.7L837.5 573.7L836.5 585.5L835.5 595.1L834.5 570.6L833.5 572.0L832.5 571.0L831.5 572.3L830.5 600.0L829.5 598.4L828.5 585.6L827.5 570.7L826.5 558.1L825.5 561.1L824.5 575.7L823.5 600.3L822.5 588.8L821.5 572.7L820.5 560.3L819.5 562.2L818.5 565.0L817.5 574.2L816.5 571.6L815.5 564.9L814.5 573.1L813.5 587.8L812.5 579.2L811.5 594.4L810.5 576.2L809.5 553.3L808.5 556.9L807.5 572.0L806.5 574.5L805.5 572.9L804.5 584.2L803.5 571.6L802.5 563.5L801.5 564.9L800.5 565.5L799.5 561.5L798.5 561.4L797.5 553.9L796.5 560.0L795.5 567.5L794.5 559.8L793.5 567.5L792.5 568.3L791.5 562.2L790.5 559.1L789.5 578.4L788.5 574.3L787.5 567.1L786.5 581.1L785.5 574.7L784.5 549.3L783.5 552.6L782.5 557.1L781.5 556.2L780.5 561.3L779.5 561.3L778.5 551.6L777.5 564.7L776.5 565.6L775.5 568.2L774.5 575.6L773.5 575.1L772.5 570.7L771.5 569.7L770.5 567.4L769.5 563.8L768.5 572.6L767.5 573.7L766.5 560.0L765.5 571.4L764.5 578.8L763.5 600.2L762.5 579.5L761.5 569.8L760.5 565.6L759.5 563.5L758.5 561.3L757.5 562.1L756.5 566.9L755.5 576.9L754.5 577.0L753.5 595.5L752.5 604.5L751.5 573.7L750.5 568.2L749.5 564.1L748.5 564.6L747.5 572.7L746.5 589.9L745.5 589.0L744.5 560.0L743.5 559.8L742.5 561.6L741.5 570.3L740.5 573.1L739.5 573.7L738.5 592.3L737.5 583.5L736.5 561.0L735.5 551.0L734.5 563.5L733.5 568.7L732.5 595.7L731.5 594.4L730.5 565.3L729.5 592.9L728.5 583.1L727.5 597.6L726.5 564.6L725.5 563.7L724.5 593.9L723.5 612.7L722.5 597.1L721.5 579.8L720.5 575.1L719.5 586.7L718.5 590.0L717.5 601.4L716.5 579.3L715.5 572.8L714.5 568.9L713.5 578.4L712.5 581.5L711.5 585.9L710.5 573.0L709.5 559.5L708.5 560.0L707.5 561.0L706.5 557.6L705.5 563.8L704.5 582.8L703.5 593.8L702.5 573.0L701.5 561.9L700.5 560.8L699.5 577.6L698.5 604.1L697.5 590.2L696.5 572.2L695.5 565.2L694.5 579.2L693.5 581.0L692.5 603.6L691.5 584.3L690.5 584.4L689.5 575.6L688.5 560.2L687.5 562.1L686.5 562.7L685.5 578.4L684.5 582.6L683.5 577.8L682.5 581.1L681.5 600.1L680.5 594.6L679.5 592.7L678.5 566.6L677.5 550.8L676.5 550.4L675.5 561.5L674.5 565.9L673.5 572.4L672.5 572.1L671.5 561.2L670.5 558.2L669.5 563.5L668.5 571.2L667.5 571.7L666.5 558.8L665.5 557.6L664.5 568.2L663.5 567.1L662.5 583.8L661.5 595.5L660.5 596.8L659.5 597.3L658.5 599.1L657.5 565.9L656.5 552.3L655.5 555.7L654.5 569.9L653.5 570.7L652.5 570.5L651.5 562.8L650.5 557.4L649.5 556.4L648.5 561.0L647.5 563.5L646.5 564.2L645.5 562.8L644.5 564.8L643.5 568.7L642.5 571.7L641.5 566.4L640.5 567.5L639.5 567.1L638.5 573.0L637.5 561.4L636.5 552.8L635.5 593.6L634.5 592.0L633.5 569.8L632.5 575.9L631.5 568.9L630.5 602.7L629.5 593.1L628.5 575.6L627.5 573.1L626.5 569.6L625.5 570.0L624.5 563.9L623.5 576.8L622.5 595.9L621.5 592.7L620.5 596.9L619.5 563.6L618.5 579.3L617.5 593.6L616.5 593.0L615.5 576.6L614.5 566.6L613.5 566.5L612.5 590.3L611.5 581.3L610.5 584.9L609.5 567.2L608.5 560.3L607.5 572.5L606.5 578.8L605.5 596.1L604.5 581.1L603.5 564.2L602.5 556.5L601.5 559.2L600.5 559.7L599.5 555.8L598.5 563.7L597.5 566.2L596.5 574.1L595.5 594.8L594.5 586.0L593.5 580.9L592.5 584.8L591.5 562.6L590.5 561.5L589.5 597.5L588.5 589.9L587.5 590.7L586.5 568.3L585.5 556.0L584.5 554.6L583.5 557.1L582.5 562.4L581.5 569.1L580.5 574.0L579.5 582.0L578.5 580.2L577.5 569.7L576.5 593.9L575.5 580.9L574.5 593.6L573.5 582.9L572.5 577.7L571.5 579.3L570.5 561.4L569.5 569.4L568.5 585.7L567.5 586.3L566.5 573.9L565.5 553.7L564.5 550.2L563.5 556.1L562.5 567.0L561.5 594.3L560.5 589.7L559.5 572.3L558.5 586.7L557.5 587.9L556.5 578.0L555.5 559.4L554.5 564.0L553.5 581.2L552.5 583.3L551.5 591.9L550.5 593.1L549.5 580.1L548.5 560.7L547.5 566.7L546.5 592.9L545.5 602.3L544.5 577.0L543.5 567.3L542.5 573.3L541.5 574.9L540.5 580.4L539.5 594.2L538.5 585.0L537.5 559.2L536.5 566.0L535.5 569.5L534.5 569.7L533.5 565.5L532.5 574.9L531.5 593.5L530.5 572.3L529.5 571.9L528.5 577.8L527.5 601.3L526.5 596.6L525.5 570.5L524.5 561.2L523.5 555.9L522.5 553.4L521.5 560.3L520.5 561.8L519.5 577.3L518.5 589.7L517.5 573.0L516.5 598.0L515.5 569.1L514.5 554.4L513.5 552.0L512.5 567.7L511.5 606.9L510.5 560.1L509.5 583.3L508.5 567.2L507.5 554.7L506.5 559.1L505.5 561.0L504.5 560.4L503.5 577.9L502.5 575.3L501.5 568.0L500.5 596.2L499.5 597.4L498.5 573.4L497.5 581.0L496.5 574.9L495.5 560.6L494.5 553.4L493.5 558.9L492.5 568.0L491.5 568.0L490.5 571.6L489.5 593.5L488.5 599.0L487.5 565.4L486.5 563.7L485.5 564.8L484.5 554.9L483.5 562.7L482.5 573.5L481.5 573.5L480.5 571.5L479.5 561.4L478.5 566.4L477.5 598.2L476.5 593.8L475.5 569.1L474.5 561.8L473.5 562.3L472.5 584.2L471.5 585.6L470.5 569.4L469.5 578.4L468.5 594.6L467.5 582.7L466.5 585.6L465.5 588.9L464.5 583.9L463.5 582.3L462.5 569.0L461.5 566.3L460.5 558.3L459.5 559.1L458.5 557.7L457.5 562.5L456.5 582.3L455.5 565.3L454.5 558.4L453.5 579.4L452.5 595.0L451.5 575.4L450.5 565.8L449.5 580.8L448.5 600.1L447.5 585.4L446.5 585.3L445.5 598.2L444.5 590.7L443.5 587.8L442.5 569.3L441.5 569.9L440.5 574.1L439.5 567.2L438.5 577.0L437.5 580.3L436.5 578.9L435.5 588.3L434.5 566.4L433.5 553.9L432.5 559.7L431.5 576.0L430.5 591.0L429.5 572.3L428.5 564.1L427.5 563.0L426.5 562.5L425.5 578.4L424.5 569.9L423.5 558.7L422.5 559.1L421.5 559.4L420.5 572.5L419.5 575.0L418.5 567.0L417.5 566.0L416.5 580.0L415.5 599.3L414.5 593.5L413.5 577.2L412.5 570.2L411.5 561.1L410.5 594.6L409.5 580.1L408.5 572.3L407.5 596.3L406.5 582.4L405.5 588.5L404.5 560.8L403.5 555.2L402.5 554.5L401.5 555.2L400.5 565.5L399.5 575.9L398.5 575.5L397.5 567.2L396.5 564.8L395.5 575.8L394.5 576.7L393.5 564.8L392.5 567.7L391.5 573.8L390.5 563.8L389.5 574.2L388.5 590.1L387.5 594.0L386.5 600.3L385.5 563.8L384.5 560.9L383.5 565.7L382.5 585.6L381.5 589.7L380.5 573.1L379.5 573.4L378.5 577.2L377.5 572.5L376.5 563.8L375.5 567.8L374.5 567.7L373.5 568.0L372.5 575.3L371.5 573.3L370.5 570.2L369.5 576.7L368.5 598.8L367.5 589.0L366.5 567.8L365.5 564.5L364.5 560.4L363.5 565.8L362.5 569.5L361.5 573.2L360.5 581.4L359.5 571.5L358.5 565.5L357.5 593.9L356.5 592.7L355.5 581.0L354.5 582.5L353.5 584.7L352.5 571.3L351.5 561.9L350.5 566.2L349.5 563.2L348.5 553.8L347.5 559.5L346.5 572.5L345.5 572.1L344.5 575.7L343.5 577.1L342.5 584.3L341.5 591.1L340.5 579.6L339.5 570.6L338.5 576.6L337.5 571.7L336.5 572.7L335.5 573.5L334.5 571.6L333.5 574.3L332.5 567.5L331.5 579.9L330.5 593.9L329.5 581.5L328.5 573.2L327.5 572.1L326.5 573.8L325.5 564.8L324.5 559.7L323.5 562.5L322.5 568.1L321.5 577.9L320.5 570.5L319.5 569.3L318.5 579.5L317.5 575.0L316.5 571.2L315.5 576.7L314.5 565.7L313.5 563.9L312.5 579.0L311.5 582.8L310.5 590.1L309.5 595.4L308.5 586.5L307.5 582.1L306.5 596.6L305.5 597.6L304.5 599.8L303.5 585.9L302.5 568.4L301.5 564.7L300.5 572.2L299.5 605.7L298.5 601.3L297.5 592.1L296.5 588.1L295.5 575.2L294.5 564.8L293.5 568.6L292.5 560.5L291.5 555.9L290.5 592.2L289.5 573.4L288.5 553.9L287.5 568.8L286.5 569.6L285.5 565.3L284.5 568.3L283.5 600.2L282.5 594.7L281.5 577.3L280.5 612.7L279.5 593.0L278.5 567.4L277.5 564.7L276.5 562.7L275.5 570.0L274.5 593.8L273.5 575.7L272.5 576.8L271.5 575.0L270.5 575.4L269.5 559.0L268.5 578.7L267.5 580.5L266.5 591.0L265.5 592.6L264.5 581.7L263.5 576.8L262.5 559.2L261.5 568.5L260.5 555.2L259.5 555.8L258.5 568.1L257.5 571.9L256.5 566.6L255.5 560.7L254.5 562.0L253.5 563.9L252.5 592.4L251.5 584.4L250.5 578.8L249.5 572.5L248.5 563.3L247.5 566.3L246.5 556.6L245.5 553.8L244.5 557.0L243.5 554.0L242.5 563.2L241.5 575.6L240.5 562.3L239.5 567.7L238.5 563.8L237.5 560.9L236.5 556.5L235.5 586.7L234.5 598.9L233.5 559.9L232.5 551.2L231.5 544.5L230.5 553.0L229.5 567.9L228.5 555.9L227.5 546.3L226.5 554.8L225.5 565.1L224.5 562.9L223.5 572.4L222.5 579.4L221.5 571.7L220.5 559.4L219.5 554.8L218.5 556.1L217.5 579.1L216.5 601.2L215.5 573.9L214.5 565.4L213.5 546.9L212.5 552.5L211.5 555.3L210.5 555.3L209.5 551.8L208.5 546.6L207.5 536.1L206.5 539.1L205.5 539.5L204.5 541.0L203.5 560.5L202.5 580.4L201.5 563.4L200.5 549.6L199.5 557.5L198.5 562.2L197.5 569.9L196.5 569.6L195.5 561.9L194.5 564.8L193.5 571.2L192.5 596.7L191.5 582.3L190.5 569.2L189.5 582.6L188.5 574.3L187.5 557.4L186.5 553.6L185.5 555.5L184.5 556.3L183.5 569.1L182.5 555.3L181.5 547.4L180.5 549.0L179.5 548.5L178.5 542.4L177.5 556.7L176.5 552.7L175.5 549.7L174.5 549.7L173.5 545.6L172.5 540.5L171.5 543.2L170.5 557.0L169.5 561.2L168.5 553.2L167.5 559.8L166.5 563.4L165.5 564.8L164.5 553.4L163.5 541.6L162.5 539.0L161.5 550.7L160.5 552.2L159.5 548.2L158.5 556.2L157.5 554.5L156.5 561.0L155.5 598.8L154.5 587.3L153.5 562.9L152.5 562.0L151.5 549.7L150.5 546.9L149.5 573.7L148.5 567.9L147.5 545.5L146.5 551.7L145.5 545.4L144.5 539.8L143.5 552.7L142.5 568.3L141.5 565.4L140.5 553.2L139.5 549.0L138.5 546.5L137.5 551.8L136.5 561.7L135.5 559.7L134.5 567.2L133.5 556.2L132.5 544.9L131.5 536.9L130.5 545.5L129.5 552.6L128.5 563.9L127.5 568.1L126.5 565.2L125.5 567.5L124.5 597.3L123.5 575.3L122.5 577.2L121.5 538.1L120.5 534.5L119.5 549.6L118.5 550.2L117.5 562.4L116.5 564.6L115.5 552.3L114.5 559.7L113.5 554.8L112.5 552.2L111.5 551.9L110.5 553.1L109.5 582.1L108.5 585.1L107.5 549.4L106.5 538.9L105.5 539.0L104.5 543.6L103.5 557.3L102.5 561.6L101.5 561.0L100.5 545.1L99.5 537.1L98.5 545.8L97.5 550.0L96.5 554.1L95.5 563.0L94.5 573.3L93.5 591.1L92.5 591.4L91.5 580.8L90.5 558.5L89.5 553.7L88.5 597.6L87.5 580.7L86.5 558.6L85.5 562.5L84.5 583.5L83.5 552.8L82.5 548.3L81.5 559.2L80.5 593.0L79.5 566.8L78.5 544.7L77.5 539.8L76.5 539.5L75.5 548.8L74.5 559.8L73.5 551.4L72.5 555.5L71.5 548.2L70.5 538.4L69.5 544.6L68.5 545.6L67.5 551.5L66.5 554.1L65.5 551.6L64.5 561.9L63.5 560.3L62.5 567.1L61.5 568.3L60.5 551.3L59.5 565.8L58.5 553.9L57.5 548.3L56.5 558.6L55.5 597.1L54.5 564.5L53.5 554.4L52.5 564.0L51.5 577.0L50.5 557.2L49.5 550.4L48.5 558.4L47.5 567.6L46.5 567.7L45.5 554.9L44.5 544.6L43.5 550.7L42.5 550.3L41.5 551.2L40.5 551.3L39.5 550.3L38.5 558.0L37.5 573.7L36.5 568.7L35.5 553.7L34.5 547.5L33.5 543.4L32.5 553.9L31.5 574.2L30.5 580.6L29.5 588.4L28.5 565.3L27.5 556.9L26.5 552.0L25.5 542.3L24.5 535.9L23.5 543.8L22.5 558.7L21.5 563.2L20.5 571.3L19.5 578.9L18.5 555.6L17.5 555.8L16.5 564.1L15.5 557.0L14.5 551.0L13.5 556.6L12.5 555.2L11.5 555.0L10.5 574.7Z" fill="#ffff00" stroke="#ffff00" stroke-width="0.6"/><path d="M10.5 573.7V579.4M13.5 555.6V559.7M15.5 556.0V559.1M16.5 563.1V572.9M21.5 562.2V566.9M23.5 542.8V561.1M28.5 564.3V582.0M31.5 573.2V578.1M33.5 542.4V546.5M35.5 552.7V557.9M36.5 567.7V605.8M38.5 557.0V569.0M40.5 550.3V575.8M43.5 549.7V554.5M45.5 553.9V559.8M48.5 557.4V570.5M52.5 563.0V566.9M53.5 553.4V600.4M55.5 596.1V609.5M56.5 557.6V572.7M58.5 552.9V559.6M59.5 564.8V583.3M60.5 550.3V554.3M66.5 553.1V568.1M67.5 550.5V570.9M68.5 544.6V567.5M70.5 537.4V541.3M71.5 547.2V561.1M72.5 554.5V562.4M76.5 538.5V544.8M82.5 547.3V565.3M83.5 551.8V571.2M84.5 582.5V590.8M85.5 561.5V587.7M86.5 557.6V615.7M88.5 596.6V600.6M89.5 552.7V560.0M90.5 557.5V560.7M93.5 590.1V597.9M95.5 562.0V580.0M98.5 544.8V549.8M102.5 560.6V563.6M105.5 538.0V544.1M109.5 581.1V590.3M111.5 550.9V555.7M112.5 551.2V575.3M114.5 558.7V563.2M120.5 533.5V547.2M121.5 537.1V548.7M122.5 576.2V592.6M125.5 566.5V590.6M127.5 567.1V597.3M129.5 551.6V571.0M132.5 543.9V555.1M133.5 555.2V561.3M134.5 566.2V581.2M135.5 558.7V569.9M140.5 552.2V576.7M142.5 567.3V570.5M143.5 551.7V569.3M145.5 544.4V576.4M146.5 550.7V557.5M147.5 544.5V548.1M148.5 566.9V574.0M149.5 572.7V584.7M150.5 545.9V549.5M153.5 561.9V576.7M155.5 597.8V604.7M159.5 547.2V560.1M160.5 551.2V561.6M161.5 549.7V560.6M162.5 538.0V553.6M166.5 562.4V569.8M169.5 560.2V582.5M175.5 548.7V558.5M177.5 555.7V573.1M180.5 548.0V553.3M182.5 554.3V568.6M184.5 555.3V563.7M185.5 554.5V586.8M191.5 581.3V605.0M192.5 595.7V626.0M193.5 570.2V589.8M194.5 563.8V570.1M198.5 561.2V565.1M199.5 556.5V583.5M201.5 562.4V594.1M206.5 538.1V555.0M209.5 550.8V560.6M210.5 554.3V559.1M214.5 564.4V579.5M217.5 578.1V583.2M218.5 555.1V566.2M220.5 558.4V573.2M225.5 564.1V592.7M228.5 554.9V572.6M230.5 552.0V558.0M232.5 550.2V554.5M233.5 558.9V565.1M236.5 555.5V566.5M237.5 559.9V579.9M243.5 553.0V576.7M244.5 556.0V575.2M246.5 555.6V561.4M248.5 562.3V566.0M250.5 577.8V613.0M251.5 583.4V594.3M255.5 559.7V586.8M256.5 565.6V572.2M257.5 570.9V593.2M258.5 567.1V582.2M259.5 554.8V574.2M260.5 554.2V573.6M267.5 579.5V585.9M268.5 577.7V584.3M271.5 574.0V584.1M272.5 575.8V585.8M275.5 569.0V588.9M276.5 561.7V582.6M283.5 599.2V623.7M284.5 567.3V583.0M287.5 567.8V594.5M289.5 572.4V578.5M290.5 591.2V594.6M291.5 554.9V582.3M294.5 563.8V573.9M295.5 574.2V582.4M297.5 591.1V594.3M299.5 604.7V615.9M300.5 571.2V588.2M302.5 567.4V616.1M304.5 598.8V608.3M306.5 595.6V634.0M311.5 581.8V592.1M315.5 575.7V582.5M316.5 570.2V575.2M317.5 574.0V605.1M320.5 569.5V575.4M324.5 558.7V575.2M325.5 563.8V573.6M327.5 571.1V577.7M328.5 572.2V582.8M332.5 566.5V569.6M333.5 573.3V580.5M335.5 572.5V576.1M336.5 571.7V579.5M337.5 570.7V598.5M338.5 575.6V590.4M339.5 569.6V579.7M340.5 578.6V581.8M342.5 583.3V616.4M343.5 576.1V583.6M344.5 574.7V577.8M346.5 571.5V608.3M348.5 552.8V589.9M349.5 562.2V566.8M350.5 565.2V588.4M352.5 570.3V590.3M353.5 583.7V594.1M356.5 591.7V606.8M357.5 592.9V603.3M358.5 564.5V582.5M359.5 570.5V579.9M360.5 580.4V588.2M362.5 568.5V572.2M363.5 564.8V571.3M365.5 563.5V568.0M368.5 597.8V639.6M371.5 572.3V581.8M373.5 567.0V579.2M374.5 566.7V620.7M375.5 566.8V580.4M378.5 576.2V590.8M379.5 572.4V586.1M381.5 588.7V594.6M382.5 584.6V592.6M387.5 593.0V596.9M390.5 562.8V570.1M391.5 572.8V610.9M392.5 566.7V599.4M394.5 575.7V592.9M395.5 574.8V582.9M397.5 566.2V574.2M398.5 574.5V595.6M400.5 564.5V568.1M401.5 554.2V577.0M402.5 553.5V584.1M403.5 554.2V560.4M404.5 559.8V587.1M406.5 581.4V584.8M408.5 571.3V592.6M409.5 579.1V592.5M411.5 560.1V575.6M412.5 569.2V598.7M421.5 558.4V561.5M422.5 558.1V564.8M425.5 577.4V580.5M430.5 590.0V613.9M431.5 575.0V580.3M435.5 587.3V608.5M437.5 579.3V591.0M438.5 576.0V610.1M440.5 573.1V577.5M444.5 589.7V594.5M448.5 599.1V604.7M449.5 579.8V600.2M451.5 574.4V599.1M454.5 557.4V568.9M455.5 564.3V571.4M458.5 556.7V563.6M459.5 558.1V564.5M461.5 565.3V581.7M463.5 581.3V632.1M465.5 587.9V595.1M468.5 593.6V610.8M469.5 577.4V590.2M470.5 568.4V579.5M471.5 584.6V601.6M473.5 561.3V592.4M474.5 560.8V609.7M475.5 568.1V573.0M477.5 597.2V619.6M478.5 565.4V601.4M479.5 560.4V564.2M486.5 562.7V565.9M487.5 564.4V570.1M488.5 598.0V618.5M491.5 567.0V578.3M492.5 567.0V600.9M495.5 559.6V566.8M498.5 572.4V581.4M499.5 596.4V603.8M502.5 574.3V583.5M504.5 559.4V568.0M505.5 560.0V567.3M506.5 558.1V578.7M507.5 553.7V585.6M508.5 566.2V579.3M511.5 605.9V610.8M512.5 566.7V577.5M514.5 553.4V558.0M515.5 568.1V577.2M516.5 597.0V617.5M517.5 572.0V601.0M519.5 576.3V582.6M520.5 560.8V589.8M521.5 559.3V568.0M523.5 554.9V563.6M525.5 569.5V581.8M526.5 595.6V614.7M529.5 570.9V574.2M530.5 571.3V576.0M531.5 592.5V602.6M533.5 564.5V577.7M534.5 568.7V572.5M535.5 568.5V613.0M538.5 584.0V605.9M539.5 593.2V630.4M542.5 572.3V578.7M544.5 576.0V581.1M545.5 601.3V612.1M546.5 591.9V599.8M548.5 559.7V583.0M551.5 590.9V597.6M552.5 582.3V589.9M553.5 580.2V589.8M557.5 586.9V593.5M558.5 585.7V589.2M561.5 593.3V604.4M562.5 566.0V569.3M563.5 555.1V562.0M564.5 549.2V555.4M565.5 552.7V597.1M566.5 572.9V586.6M569.5 568.4V576.6M573.5 581.9V601.6M574.5 592.6V599.3M575.5 579.9V619.7M578.5 579.2V589.7M579.5 581.0V604.9M581.5 568.1V577.0M585.5 555.0V585.4M590.5 560.5V565.6M591.5 561.6V577.0M593.5 579.9V594.9M595.5 593.8V597.2M600.5 558.7V563.7M604.5 580.1V588.9M606.5 577.8V582.3M608.5 559.3V566.8M609.5 566.2V570.2M613.5 565.5V599.4M614.5 565.6V571.1M615.5 575.6V592.1M616.5 592.0V639.6M617.5 592.6V596.7M618.5 578.3V587.7M619.5 562.6V575.3M622.5 594.9V639.6M625.5 569.0V579.3M626.5 568.6V575.8M629.5 592.1V639.6M631.5 567.9V574.8M633.5 568.8V584.0M634.5 591.0V600.5M635.5 592.6V602.3M637.5 560.4V574.7M641.5 565.4V572.0M643.5 567.7V601.7M644.5 563.8V576.7M645.5 561.8V565.4M647.5 562.5V565.9M648.5 560.0V588.1M652.5 569.5V587.6M653.5 569.7V590.9M655.5 554.7V557.7M659.5 596.3V626.2M661.5 594.5V608.9M663.5 566.1V582.0M665.5 556.6V564.6M667.5 570.7V586.1M670.5 557.2V560.3M672.5 571.1V587.2M674.5 564.9V582.9M675.5 560.5V566.4M679.5 591.7V628.0M680.5 593.6V600.0M681.5 599.1V617.3M682.5 580.1V614.2M683.5 576.8V603.2M684.5 581.6V605.1M685.5 577.4V590.9M689.5 574.6V578.4M694.5 578.2V585.1M697.5 589.2V595.3M698.5 603.1V616.3M703.5 592.8V598.4M709.5 558.5V568.7M710.5 572.0V578.8M712.5 580.5V589.7M714.5 567.9V575.3M715.5 571.8V581.2M716.5 578.3V582.9M717.5 600.4V605.2M719.5 585.7V590.3M723.5 611.7V622.7M724.5 592.9V604.6M726.5 563.6V568.6M728.5 582.1V586.6M730.5 564.3V584.7M732.5 594.7V600.4M733.5 567.7V572.6M734.5 562.5V571.6M735.5 550.0V566.2M737.5 582.5V639.6M738.5 591.3V595.5M739.5 572.7V594.0M740.5 572.1V582.9M741.5 569.3V578.2M744.5 559.0V585.3M745.5 588.0V597.2M746.5 588.9V593.4M747.5 571.7V575.7M749.5 563.1V566.7M750.5 567.2V571.7M751.5 572.7V586.6M752.5 603.5V615.3M754.5 576.0V580.5M758.5 560.3V569.9M759.5 562.5V576.9M761.5 568.8V585.4M762.5 578.5V586.6M763.5 599.2V602.9M764.5 577.8V597.7M766.5 559.0V586.7M767.5 572.7V581.8M768.5 571.6V614.1M770.5 566.4V612.7M771.5 568.7V576.4M772.5 569.7V584.0M776.5 564.6V567.9M780.5 560.3V570.6M784.5 548.3V554.2M789.5 577.4V611.0M795.5 566.5V570.5M796.5 559.0V568.7M798.5 560.4V564.8M803.5 570.6V585.3M805.5 571.9V585.5M808.5 555.9V562.3M812.5 578.2V583.7M814.5 572.1V577.6M817.5 573.2V589.5M818.5 564.0V591.7M819.5 561.2V567.3M820.5 559.3V569.8M821.5 571.7V582.5M823.5 599.3V610.0M827.5 569.7V574.9M830.5 599.0V608.8M831.5 571.3V579.8M832.5 570.0V590.5M836.5 584.5V588.1M839.5 578.9V601.1M840.5 567.4V577.7M843.5 569.5V587.3M844.5 575.6V580.9M845.5 597.6V603.1M846.5 570.3V576.9M851.5 550.5V557.7M853.5 580.9V636.0M854.5 581.3V584.9M855.5 563.6V577.8M857.5 577.1V589.7M858.5 553.6V565.3M861.5 574.8V600.1M862.5 583.9V592.1M863.5 565.8V571.6M868.5 594.0V601.9M869.5 576.7V587.3M871.5 572.7V585.7M873.5 563.3V591.0M874.5 563.2V567.0M875.5 592.3V617.5M878.5 567.8V577.8M879.5 580.4V585.7M880.5 573.6V580.1M881.5 598.0V609.2M882.5 573.8V587.4M883.5 577.0V592.6M887.5 573.5V584.7M890.5 589.7V597.3M892.5 565.4V600.8M893.5 560.9V567.0M894.5 555.9V568.3M895.5 562.0V567.6M896.5 577.0V584.0M897.5 577.8V582.9M898.5 593.0V596.9M901.5 582.6V594.7M902.5 555.5V564.7M903.5 567.2V579.9M906.5 557.9V566.7M907.5 556.3V564.4M908.5 562.1V580.6M909.5 569.1V591.7M910.5 567.1V571.0M911.5 567.7V575.8M912.5 560.0V582.4M916.5 594.5V611.0M918.5 586.7V596.5M919.5 559.5V567.8M920.5 564.4V608.5M921.5 566.6V578.0M923.5 575.0V603.1M926.5 585.6V600.4M931.5 583.6V599.0M934.5 591.4V635.3M937.5 592.6V606.7M939.5 594.3V628.5M940.5 569.8V581.3M943.5 580.8V589.1M945.5 577.3V604.5M947.5 556.0V559.9M949.5 562.3V585.5M951.5 582.7V587.9M952.5 588.5V595.4M955.5 552.0V555.5M956.5 547.1V559.0M957.5 553.7V585.2M959.5 565.0V599.8M961.5 576.9V605.2M966.5 593.6V602.2M967.5 594.5V601.0M976.5 581.3V590.9M979.5 563.4V579.0M980.5 558.3V580.8M981.5 552.9V583.7M983.5 557.4V560.7M984.5 575.6V581.0M985.5 559.6V567.9M987.5 569.4V598.4M989.5 558.9V561.9M991.5 558.5V572.7M993.5 568.0V584.2M995.5 549.6V556.3M996.5 551.5V562.3M1000.5 556.6V567.5M1001.5 569.4V578.4M1002.5 577.0V585.5M1003.5 566.3V580.2M1005.5 583.4V590.2M1006.5 563.0V571.3M1008.5 553.4V560.3M1009.5 559.2V565.8M1014.5 565.3V581.0M1016.5 567.0V570.4M1017.5 555.5V576.0M1018.5 551.3V568.9M1019.5 551.7V559.5M1020.5 557.5V566.4M1023.5 560.3V578.2M1024.5 579.1V603.2M1026.5 543.7V560.8M1029.5 596.9V607.7M1030.5 592.2V595.3M1033.5 563.7V595.6M1034.5 555.7V559.3M1035.5 559.9V568.5M1037.5 570.8V580.1M1038.5 588.9V625.4M1039.5 574.8V593.5M1041.5 596.2V620.1M1042.5 556.5V578.0M1044.5 572.3V577.2M1049.5 591.7V613.1M1053.5 566.5V574.8M1056.5 572.8V586.4M1057.5 565.8V574.5M1060.5 556.5V567.2M1061.5 567.1V571.4M1062.5 566.4V574.9M1066.5 591.2V609.2M1067.5 600.6V628.7M1068.5 560.3V563.8M1072.5 563.5V574.6M1073.5 593.4V608.0M1074.5 578.1V590.5M1075.5 566.6V574.2M1076.5 560.5V565.6M1079.5 572.3V586.3M1081.5 565.7V574.7M1084.5 572.0V577.0M1085.5 563.3V571.9M1087.5 571.4V589.9M1091.5 550.7V555.2M1093.5 563.1V581.8M1096.5 558.9V569.5M1097.5 554.7V566.5M1099.5 601.1V622.3M1100.5 576.9V591.4M1101.5 564.2V574.5M1103.5 553.4V558.4M1111.5 553.8V565.4M1114.5 558.4V569.5M1115.5 549.0V572.3M1116.5 571.0V579.8M1117.5 576.5V606.8M1119.5 562.2V581.1M1124.5 565.6V595.3M1126.5 566.2V574.1M1128.5 558.5V562.5M1133.5 570.9V576.6M1135.5 556.5V566.0M1137.5 567.2V573.6M1140.5 558.2V580.6M1141.5 566.6V622.9M1144.5 592.1V605.8M1146.5 582.5V593.3M1151.5 598.0V624.8M1156.5 553.3V561.9M1157.5 602.3V614.2M1159.5 553.4V570.2M1161.5 571.0V578.7M1164.5 558.8V566.6M1166.5 547.3V554.1M1171.5 552.2V565.5M1172.5 574.9V580.2M1177.5 568.9V575.2M1180.5 550.4V556.9M1181.5 563.3V567.5M1182.5 562.8V575.6M1183.5 581.4V585.5M1184.5 571.2V581.8M1186.5 569.2V572.9M1187.5 569.9V588.5M1188.5 570.2V584.5M1189.5 562.2V571.8M1190.5 561.7V599.1M1191.5 563.2V584.2M1192.5 574.1V578.9M1193.5 567.2V584.7" stroke="#f0f000" stroke-width="1"/>
    <path d="M156 160V318" stroke="#ffff00" stroke-width="2.2"/><path d="M156 318V450" stroke="#ffff00" stroke-width="1.8"/><path d="M30.2 402V424" stroke="#c8c800" stroke-width="0.9"/><path d="M30.2 423V458" stroke="#ffff00" stroke-width="1.4"/>
    <rect x="10.3" y="160.3" width="1185" height="480.3" fill="none" stroke="#3e4e70" stroke-width="1.8"/>
  </svg>
  <div class="yl" style="top:32.5px;left:19px">0.00dBm</div>
<div class="yl" style="top:80.6px;left:19px">-10.00dBm</div>
<div class="yl" style="top:128.6px;left:19px">-20.00dBm</div>
<div class="yl" style="top:176.7px;left:19px">-30.00dBm</div>
<div class="yl" style="top:224.7px;left:19px">-40.00dBm</div>
<div class="yl" style="top:272.8px;left:19px">-50.00dBm</div>
<div class="yl" style="top:320.9px;left:19px">-60.00dBm</div>
<div class="yl" style="top:368.9px;left:19px">-70.00dBm</div>
<div class="yl" style="top:417.0px;left:19px">-80.00dBm</div>
<div class="yl" style="top:465.0px;left:19px">-90.00dBm</div>
<div class="yl" style="top:513.1px;left:19px">-100.00dBm</div>
  <div class="a" style="left:8px;top:529.5px;font-size:16px;color:#d8dae0;white-space:nowrap">中心频率 4.005 GHz</div>
  <div class="a" style="left:528px;top:529.5px;font-size:16px;color:#d8dae0;white-space:nowrap">分辨率带宽 3.0 MHz</div>
  <div class="a" style="right:4px;top:529.5px;font-size:16px;color:#d8dae0;white-space:nowrap">频宽 7.99 GHz</div>
</div>

<!-- SIDEBAR -->
<div id="side" class="a">
  <div class="sb" style="top:2.6px"><div class="in"></div><div class="lb">功能复位</div></div>
<div class="sb" style="top:63.9px"><div class="in"></div><div class="lb">单次扫描</div></div>
<div class="sb" style="top:125.2px"><div class="in"></div><div class="lb">连续扫描</div></div>
<div class="sb" style="top:186.5px"><div class="in"></div><div class="lb">保存文件</div></div>
<div class="sb" style="top:247.8px"><div class="in"></div><div class="lb">回放文件</div></div>
<div class="sb" style="top:309.1px"><div class="in"></div><div class="lb">新建窗口</div></div>
<div class="sb" style="top:370.4px"><div class="in"></div><div class="lb">SCPI记录</div></div>
<div class="sb" style="top:431.7px"><div class="in"></div><div class="lb">屏幕快照</div></div>
<div class="sb" style="top:493.0px"><div class="in"></div><div class="lb"></div></div>
<svg class="a" style="left:0;top:0" width="67" height="559" viewBox="1201 119 67 559"><g transform="translate(1216 124)"><path d="M6.2 18.6H30.2Q31.2 18.6 31.2 19.6V26.1Q31.2 27.1 30.2 27.1H6.2Q5.2 27.1 5.2 26.1V19.6Q5.2 18.6 6.2 18.6Z" fill="#2a52a2" stroke="#c4ccde" stroke-width="1.1"/><circle cx="18.4" cy="13.5" r="8.1" fill="#27468f"/><path d="M13.2 7.3A8.1 8.1 0 1 1 12.2 18.6" stroke="#c4ccde" stroke-width="1.1" fill="none"/><path d="M12.4 6.4L15.4 8.2M12.4 6.4L12.6 9.6" stroke="#c4ccde" stroke-width="1.1" fill="none"/><rect x="27" y="21" width="2.2" height="1.3" rx="0.65" fill="#fff"/></g><g transform="translate(1216 185)"><circle cx="18.4" cy="15.7" r="13" fill="#2a52a2" stroke="#c4ccde" stroke-width="1.1"/><path d="M12.1 13.4H18.6V10.3L25.6 15.9L18.6 21.5V18.6H12.1Z" stroke="#c4ccde" stroke-width="1.1" fill="none" stroke-width="1.2"/></g><g transform="translate(1216 246)"><path d="M6.7 10C8 4 16 2 23 5.5L29.6 4.5V15.5L19 12.8L21.8 10.5C17 6.5 11 7.5 6.7 10Z" fill="#2a52a2" stroke="#c4ccde" stroke-width="1.1"/><path d="M29.6 21C28.3 27 20 29 13 25.5L6.5 26.5V15L17 18L14.3 20.5C19 24.5 25 23.5 29.6 21Z" fill="#2a52a2" stroke="#c4ccde" stroke-width="1.1"/></g><g transform="translate(1216 308)"><path d="M6 3.1H25.8L31 8.3V27.6H6Z" fill="#2a52a2" stroke="#c4ccde" stroke-width="1.1" stroke-linejoin="round"/><path d="M12 3.1V10.6Q12 11.6 13 11.6H23.5Q24.5 11.6 24.5 10.6V3.1M11 27.6V18Q11 16.5 12.5 16.5H24.5Q26 16.5 26 18V27.6" stroke="#c4ccde" stroke-width="1.1" fill="none"/><circle cx="20.5" cy="7.2" r="1.1" fill="#fff"/><path d="M15 21H22M15 23.5H22" stroke="#a8b8dc" stroke-width="1"/></g><g transform="translate(1216 368)"><path d="M6 4.3H12.8L15 7.6H27V11H10.7L6 25Z" fill="#1f3f85" stroke="#c4ccde" stroke-width="1.1" stroke-linejoin="round"/><path d="M10.7 11.5H31.7L24 25H6Z" fill="#2a52a2" stroke="#c4ccde" stroke-width="1.1" stroke-linejoin="round"/></g><g transform="translate(1216 430)"><rect x="5.4" y="3.6" width="25.5" height="23.8" rx="1" fill="#2a4a95" stroke="#c4ccde" stroke-width="1.1"/><rect x="7.6" y="9.6" width="21.1" height="16.2" rx="1" stroke="#c4ccde" stroke-width="1.1" fill="none"/><path d="M7.6 20.6H28.7M22.6 9.6V25.8" stroke="#c4ccde" stroke-width="0.8"/><rect x="13" y="19.7" width="5" height="1.8" rx="0.9" fill="#e8eef8"/><rect x="21.7" y="13" width="1.8" height="4.5" rx="0.9" fill="#e8eef8"/><circle cx="24.6" cy="7" r="0.8" fill="#c4ccde"/><circle cx="28" cy="7" r="0.8" fill="#c4ccde"/></g><g transform="translate(1216 491)"><path d="M6.5 4.3H29.9Q30.9 4.3 30.9 5.3V23.4Q30.9 24.4 29.9 24.4H19L12.5 29V24.4H6.5Q5.4 24.4 5.4 23.4V5.3Q5.4 4.3 6.5 4.3Z" fill="#2a52a2" stroke="#c4ccde" stroke-width="1.1"/><circle cx="9" cy="14.4" r="0.8" fill="#e8eef8"/><text x="19.5" y="17" font-size="7.6" fill="#b8c6e6" text-anchor="middle" font-family="Liberation Sans">SCPI</text></g><g transform="translate(1216 553)"><rect x="6.7" y="4.9" width="22.9" height="23.8" fill="#2a52a2"/><path d="M5.5 10V4.5Q5.5 3.5 6.5 3.5H11M25 3.5H29.5Q30.5 3.5 30.5 4.5V10M30.5 24V29Q30.5 30 29.5 30H25M11 30H6.5Q5.5 30 5.5 29V24" stroke="#c4ccde" stroke-width="1.1" fill="none" stroke-width="1.2"/><path d="M9.2 12Q9.2 11.4 9.8 11.4H13.8L14.8 9.5H20.8L21.8 11.4H26.2Q26.9 11.4 26.9 12V22.8Q26.9 23.5 26.2 23.5H9.8Q9.2 23.5 9.2 22.8Z" stroke="#c4ccde" stroke-width="1.1" fill="none"/><circle cx="18" cy="16.8" r="3" stroke="#c4ccde" stroke-width="1.1" fill="none"/><circle cx="23.8" cy="14.3" r="0.7" fill="#e8eef8"/></g><path d="M1225 622A11 11 0 0 1 1243 622" stroke="#9aa6c0" stroke-width="1" fill="#1f3d80"/></svg>
<div class="a" style="left:0;top:502.8px;width:67px;height:56px;background:#030408"></div>
<svg class="a" style="left:0;top:0" width="67" height="559" viewBox="1201 119 67 559"><defs><radialGradient id="ng" cx="0.5" cy="0.5" r="0.5"><stop offset="0.72" stop-color="#0d1118"/><stop offset="0.93" stop-color="#1e232d"/><stop offset="1" stop-color="#2a2f38"/></radialGradient></defs><circle cx="1236.4" cy="652.3" r="26.3" fill="url(#ng)"/><circle cx="1236.4" cy="652.3" r="20.5" fill="#132247"/><g transform="translate(1236.2 652.3)" fill="#1a2d62" stroke="#5a7ad0" stroke-width="1.4" stroke-linejoin="round"><path d="M-14.2 -12.6Q-14.2 -14.2 -12.6 -14.2L-8.8 -14.2L-2.2 -4.4L-4.4 -2.2L-14.2 -8.8Z" transform="rotate(0)"/><path d="M-14.2 -12.6Q-14.2 -14.2 -12.6 -14.2L-8.8 -14.2L-2.2 -4.4L-4.4 -2.2L-14.2 -8.8Z" transform="rotate(90)"/><path d="M-14.2 -12.6Q-14.2 -14.2 -12.6 -14.2L-8.8 -14.2L-2.2 -4.4L-4.4 -2.2L-14.2 -8.8Z" transform="rotate(180)"/><path d="M-14.2 -12.6Q-14.2 -14.2 -12.6 -14.2L-8.8 -14.2L-2.2 -4.4L-4.4 -2.2L-14.2 -8.8Z" transform="rotate(270)"/></g><circle cx="1236.2" cy="652.3" r="2.4" fill="none" stroke="#c8d2e8" stroke-width="1"/><circle cx="1236.3" cy="639.8" r="0.9" fill="#c8d2e8"/><circle cx="1236.3" cy="664.8" r="0.9" fill="#c8d2e8"/><circle cx="1223.5" cy="652.5" r="0.9" fill="#c8d2e8"/><circle cx="1248.8" cy="652.5" r="0.9" fill="#c8d2e8"/></svg>
</div>

<!-- STATUS BAR -->
<div id="status" class="a">
  <svg class="a" style="left:0;top:-16px" width="80" height="50" viewBox="0 664 80 50"><defs><linearGradient id="sg" x1="0" y1="0" x2="1" y2="1"><stop offset="0" stop-color="#9ab8e8"/><stop offset="0.35" stop-color="#2a80f0"/><stop offset="1" stop-color="#2a80f0"/></linearGradient></defs><circle cx="35.5" cy="691.3" r="21.6" fill="#25282f" stroke="url(#sg)" stroke-width="1.8"/></svg>
<svg class="a" style="left:0;top:-16px" width="80" height="50" viewBox="0 664 80 50"><path d="M29 680.6H42Q42.8 680.6 42.8 681.4V688M37 690.6H28.8Q28 690.6 28 689.8V681.4Q28 680.6 28.8 680.6" fill="none" stroke="#bfc3cc" stroke-width="1.2"/><path d="M30.5 683.5H36M30.5 685.8H33M31 692.5H36" stroke="#bfc3cc" stroke-width="1"/><g transform="translate(39.9 688.1)"><path d="M-1 -4.6H1L1.4 -3.3L2.7 -3.9L4 -2.6L3.4 -1.3L4.6 -1V1L3.4 1.3L4 2.6L2.7 3.9L1.4 3.3L1 4.6H-1L-1.4 3.3L-2.7 3.9L-4 2.6L-3.4 1.3L-4.6 1V-1L-3.4 -1.3L-4 -2.6L-2.7 -3.9L-1.4 -3.3Z" fill="#2a6ae8"/><circle r="1.8" fill="#25282f"/></g></svg>
<div class="a" style="left:25px;top:12px;font-size:11px;color:#e6e9ef">系统</div>
<svg class="a" style="left:84px;top:9px" width="27" height="15" viewBox="84 689 27 15"><rect x="85.5" y="691.2" width="23" height="12" fill="#152c40"/><path d="M85.2 694.5V691.2H88M105.5 691.2H108.7V694.5M108.7 700.3V703.5H105.5M88 703.5H85.2V700.3" fill="none" stroke="#1ab0d0" stroke-width="1.1"/><path d="M87.5 697.4C88.23 692 89.21 692 89.94 697.4C90.67 702.8 91.65 702.8 92.38 697.4C93.11 692 94.09 692 94.82 697.4C95.55 702.8 96.53 702.8 97.26 697.4C97.99 692 98.97 692 99.70 697.4C100.43 702.8 101.41 702.8 102.14 697.4C102.87 692 103.85 692 104.58 697.4C105.31 702.8 106.29 702.8 107.02 697.4" fill="none" stroke="#1ab0d0" stroke-width="1"/></svg>
<div class="a" style="left:115px;top:9px;font-size:13px;color:#eef0f4">扫描中...</div>
<div class="a" style="left:255px;top:9px;width:1px;height:17px;background:#30384a"></div>
<div class="a" style="left:512px;top:9px;width:1px;height:17px;background:#30384a"></div>
<div class="a" style="left:770px;top:9px;width:1px;height:17px;background:#30384a"></div>
<div class="a" style="left:1166px;top:9px;width:1px;height:17px;background:#30384a"></div>
<div class="a" style="left:1166px;top:3px;width:102px;text-align:center;font-size:12px;line-height:14px;color:#e6e9ef">2025-03-05<br>10:33:41</div>
</div>

<!-- DIALOG -->
<div id="dlg" class="a">
  <div id="dhead" class="a">
    <div class="a" style="left:6px;top:8px;font-size:13px;color:#eef0f4">自定义菜单</div>
    <div class="a" style="left:269px;top:3px;width:79px;height:26px;border-radius:13px;border:1px solid #4a5878;background:#283350;text-align:center;font-size:12px;line-height:24px;color:#eef0f4">删除全部</div>
    <div class="a" style="left:378px;top:11px;width:150px;height:10px;border-radius:5px;background:linear-gradient(90deg,#8ea3d8,#4a5a80)"></div>
    <div class="a" style="left:517px;top:5px;width:22px;height:22px;border-radius:50%;background:#a9bdee;border:3px solid #4e5d86"></div>
    <svg class="a" style="left:593px;top:10px" width="14" height="14"><path d="M1 1L13 13M13 1L1 13" stroke="#c8ccd6" stroke-width="1.3"/></svg>
  </div>
  <div class="cell" style="left:3px;top:36px"><div class="l">中心频率</div><div class="v">4.005 GHz</div></div>
<div class="cell" style="left:160px;top:36px"><div class="l">分辨率带宽</div><div class="v">3.0 MHz</div></div>
<div class="cell" style="left:317px;top:36px"><div class="l">机械衰减器</div><div class="v">10.0 dB</div></div>
<div class="cell" style="left:474px;top:36px"><div class="l">扫描</div><div class="a" style="left:1px;top:25px;width:148px;height:20px;border-radius:10px;background:#0c111d"></div><div class="a" style="left:75px;top:25px;width:74px;height:20px;border-radius:10px;background:linear-gradient(180deg,#2a5ad8,#3a8ae0)"></div><div class="a" style="left:26px;top:26px;font-size:13px;color:#8a909c">单次</div><div class="a" style="left:99px;top:26px;font-size:13px;color:#eef0f4">连续</div></div>
<div class="cell" style="left:3px;top:89px"><div class="a" style="left:27px;top:8px;width:97px;height:31px;border-radius:16px;background:#2b3653;border:1px solid #48577a;text-align:center;line-height:29px;font-size:13px;color:#eef0f4">关闭所有标记</div></div>
<div class="cell" style="left:160px;top:89px"><div class="l">频宽</div><div class="v">7.99 GHz</div></div>
</div>

<svg class="a" style="left:230px;top:94px" width="652" height="462" viewBox="230 94 652 462"><path d="M235.3 108V99.1H244M867.8 99.1H876.2V108M876.2 540.8V548.8H867.8M244 548.8H235.3V540.8" fill="none" stroke="#0a7cff" stroke-width="2"/></svg>
</body></html>
